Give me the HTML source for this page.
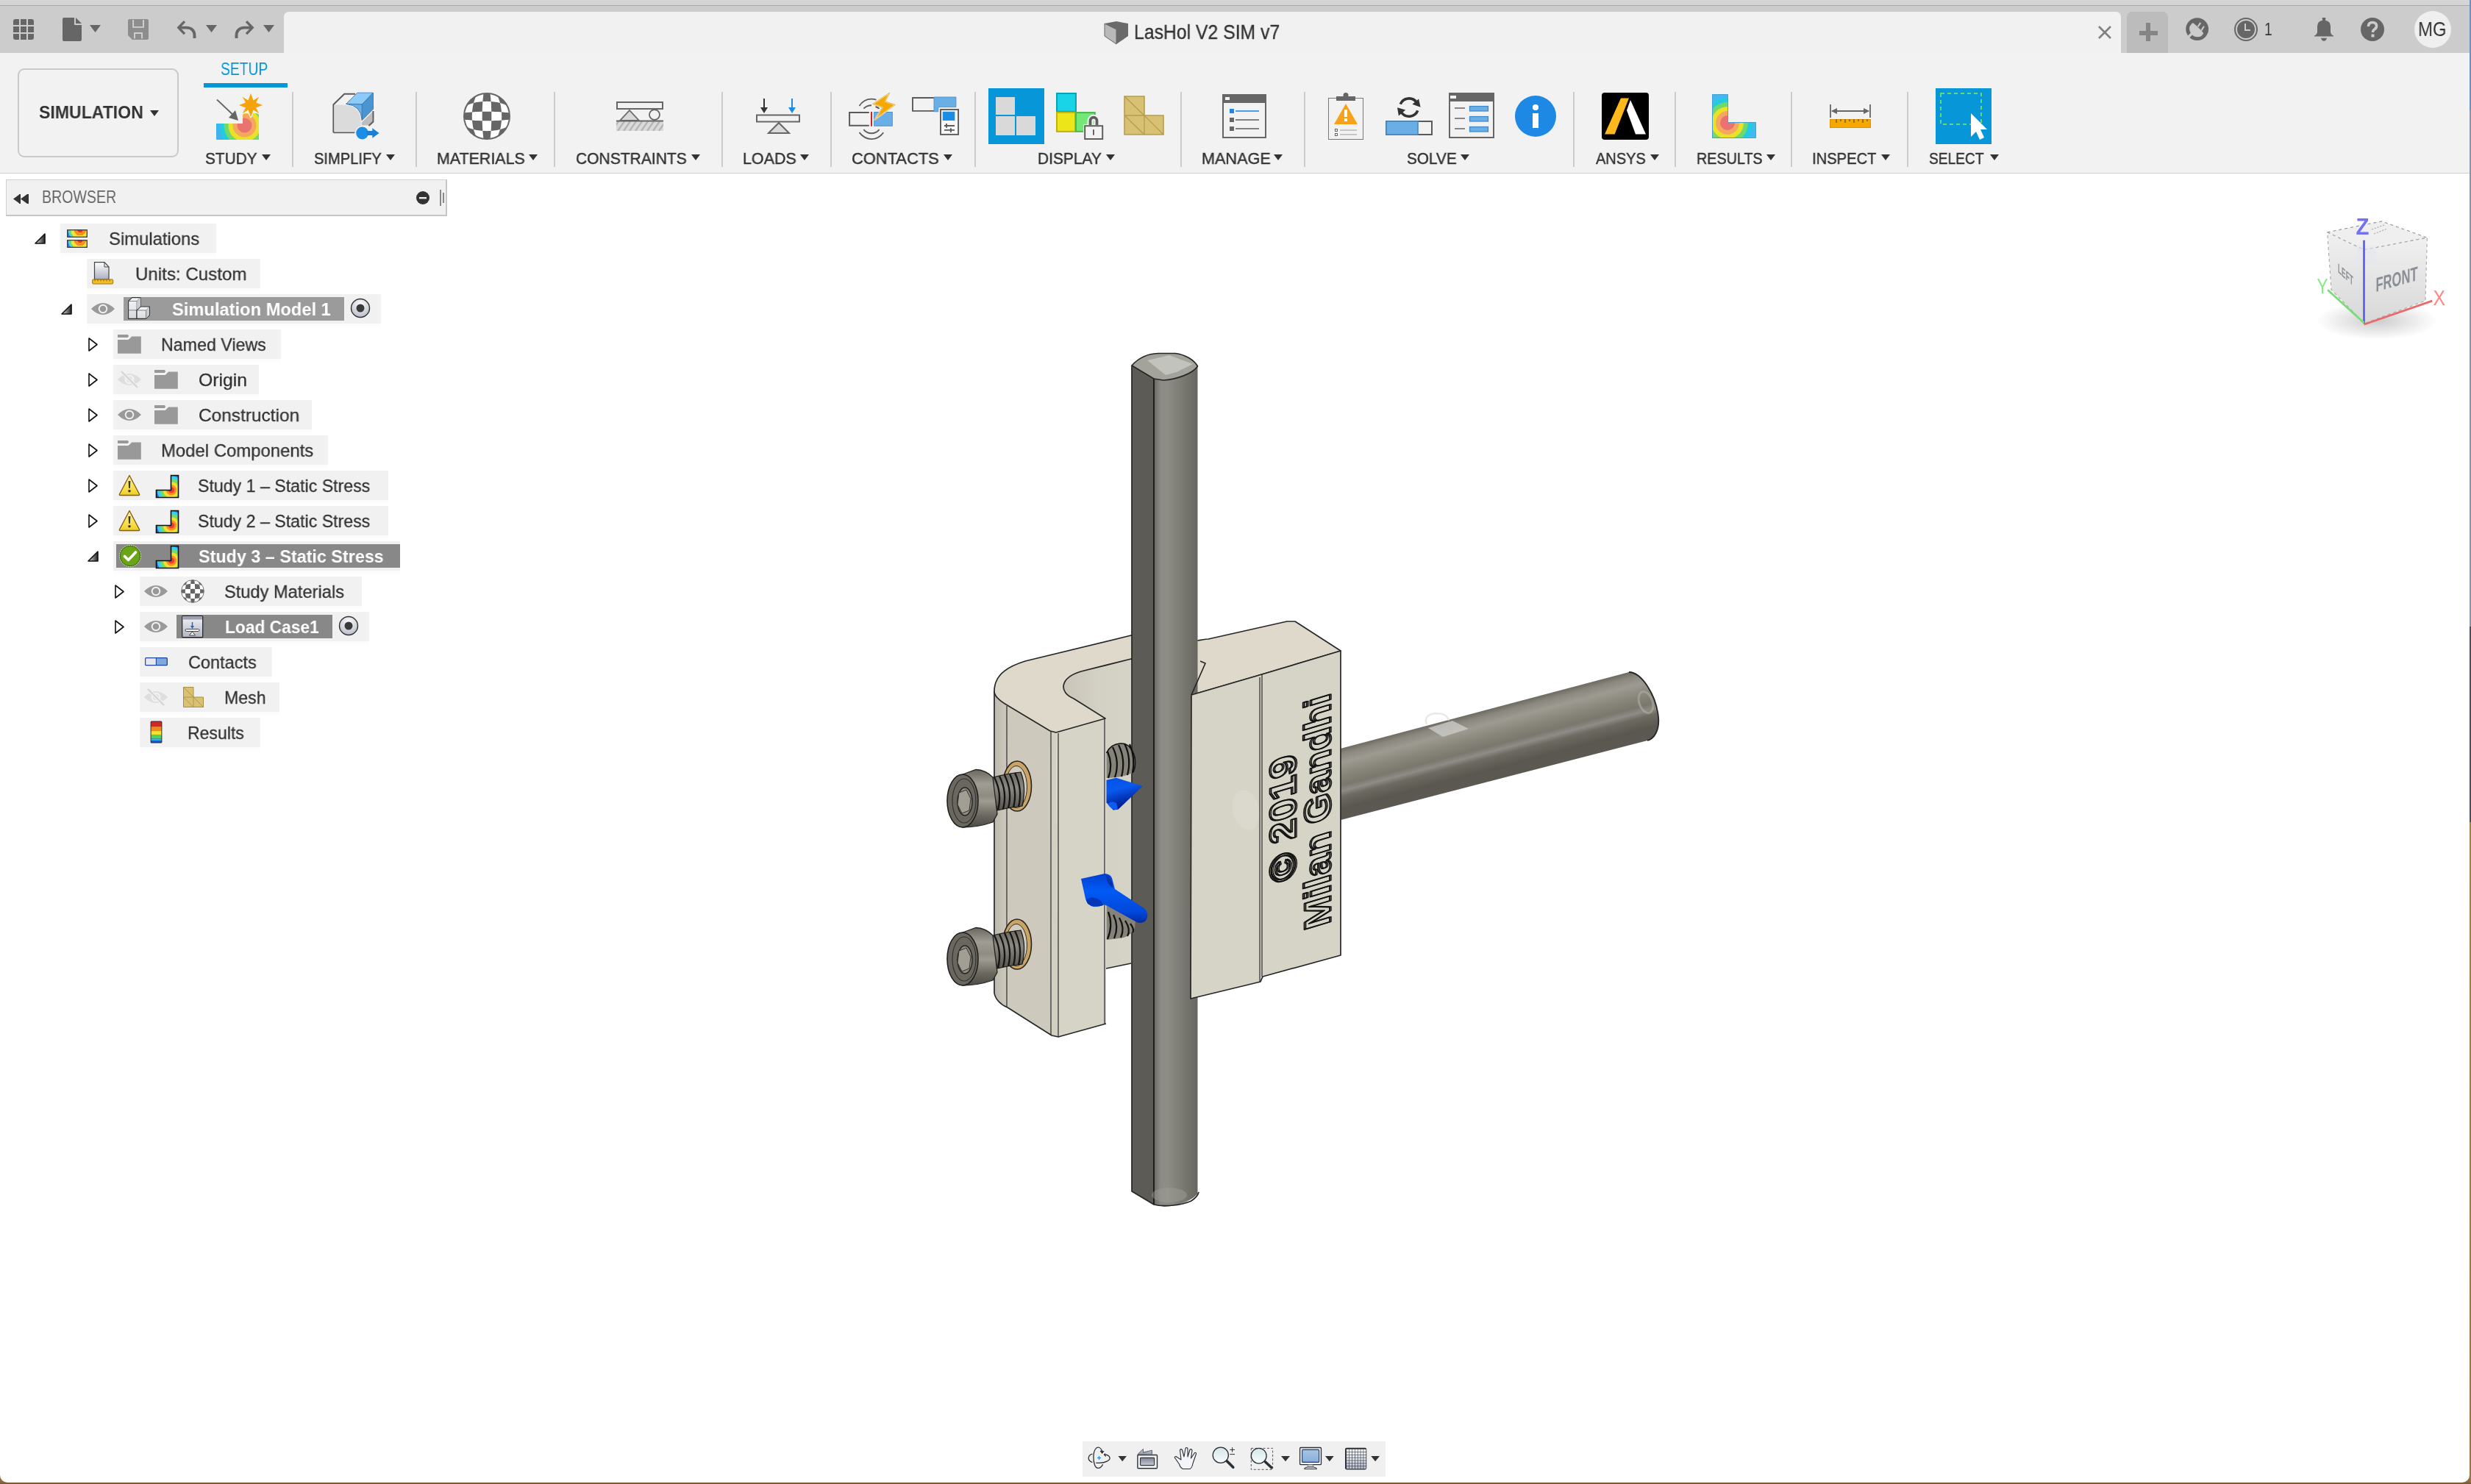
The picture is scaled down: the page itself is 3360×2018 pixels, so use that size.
<!DOCTYPE html>
<html><head><meta charset="utf-8"><style>
html,body{margin:0;padding:0;}
body{width:3360px;height:2018px;position:relative;overflow:hidden;background:#8a6a42;font-family:"Liberation Sans",sans-serif;}
.r{position:absolute;}
.i{position:absolute;overflow:visible;}
.t{position:absolute;white-space:pre;will-change:transform;-webkit-font-smoothing:antialiased;}
</style></head><body>
<div class='r' style='left:3358px;top:0px;width:2px;height:2018px;background:linear-gradient(180deg,#6f8fbf 0px,#6f8fbf 150px,#8b95a5 150px,#8b95a5 852px,#4b4f58 852px,#4b4f58 1118px,#a4804f 1118px,#9a7446 2018px);z-index:0;'></div><div class='r' style='left:0px;top:2016px;width:3360px;height:2px;background:#7b5a36;z-index:0;'></div><div class='r' style='left:0px;top:0px;width:3358px;height:7px;background:#d5d5d5;z-index:1;'></div><div class='r' style='left:0px;top:7px;width:3358px;height:1px;background:#a8a8a8;z-index:1;'></div><div class='r' style='left:0px;top:8px;width:3358px;height:64px;background:#cccccc;z-index:1;'></div><div class='r' style='left:386px;top:16px;width:2498px;height:56px;background:#f1f1f1;z-index:2;border-radius:6.5px 6.5px 0 0;'></div><div class='r' style='left:2892px;top:16px;width:56px;height:56px;background:#bcbcbc;z-index:2;border-radius:7px 7px 0 0;'></div><div class='r' style='left:2909px;top:42px;width:25px;height:6px;background:#858585;z-index:3;'></div><div class='r' style='left:2918px;top:31px;width:6px;height:25px;background:#858585;z-index:3;'></div><div class='r' style='left:0px;top:72px;width:3358px;height:163px;background:#f2f2f2;z-index:1;'></div><div class='r' style='left:0px;top:235px;width:3358px;height:1px;background:#cfcfcf;z-index:1;'></div><div class='r' style='left:0px;top:236px;width:3358px;height:1780px;background:#ffffff;z-index:1;border-radius:0 0 10px 10px;'></div><svg class='i' style='left:18px;top:26px;z-index:4;' width='28' height='28' viewBox='0 0 28 28'><defs><clipPath id='gcl'><rect width='28' height='28' rx='3'/></clipPath></defs><g clip-path='url(#gcl)'><rect x='0' y='0' width='8' height='8' fill='#666'/><rect x='0' y='10' width='8' height='8' fill='#666'/><rect x='0' y='20' width='8' height='8' fill='#666'/><rect x='10' y='0' width='8' height='8' fill='#666'/><rect x='10' y='10' width='8' height='8' fill='#666'/><rect x='10' y='20' width='8' height='8' fill='#666'/><rect x='20' y='0' width='8' height='8' fill='#666'/><rect x='20' y='10' width='8' height='8' fill='#666'/><rect x='20' y='20' width='8' height='8' fill='#666'/></g></svg><svg class='i' style='left:85px;top:24px;z-index:4;' width='26' height='32' viewBox='0 0 26 32'><path d='M2,0 H16 V9 Q16,10 17,10 H26 V30 Q26,32 24,32 H2 Q0,32 0,30 V2 Q0,0 2,0Z' fill='#666'/><path d='M18,0 L26,8 H18Z' fill='#666'/></svg><svg class='i' style='left:122px;top:34px;z-index:4;' width='15' height='10' viewBox='0 0 15 10'><path d='M0,0 H15 L7.5,10Z' fill='#666'/></svg><svg class='i' style='left:174px;top:26px;z-index:4;' width='28' height='28' viewBox='0 0 28 28'><path d='M2,0 H26 Q28,0 28,2 V26 Q28,28 26,28 H6 L0,22 V2 Q0,0 2,0Z' fill='#8d8d8d'/><path d='M7.1,1 V10.9 H21 V1' stroke='#d0d0d0' stroke-width='1.9' fill='none'/><path d='M9,26.5 V19 H19 V26.5' stroke='#d0d0d0' stroke-width='1.9' fill='none'/></svg><svg class='i' style='left:241px;top:28px;z-index:4;' width='27' height='25' viewBox='0 0 27 25'><path d='M10,1.2 L1.8,9.6 L10,18.2' stroke='#666' stroke-width='3.3' fill='none'/><path d='M2.5,9.6 H13 C19.5,9.6 23.5,14 23.5,20 V24' stroke='#666' stroke-width='3.9' fill='none'/></svg><svg class='i' style='left:280px;top:34px;z-index:4;' width='15' height='10' viewBox='0 0 15 10'><path d='M0,0 H15 L7.5,10Z' fill='#666'/></svg><svg class='i' style='left:319px;top:28px;z-index:4;' width='27' height='25' viewBox='0 0 27 25'><path d='M16,1.2 L24.2,9.6 L16,18.2' stroke='#666' stroke-width='3.3' fill='none'/><path d='M23.5,9.6 H13 C6.5,9.6 2.5,14 2.5,20 V24' stroke='#666' stroke-width='3.9' fill='none'/></svg><svg class='i' style='left:358px;top:34px;z-index:4;' width='15' height='10' viewBox='0 0 15 10'><path d='M0,0 H15 L7.5,10Z' fill='#666'/></svg><svg class='i' style='left:1502px;top:29px;z-index:4;' width='32' height='31' viewBox='0 0 32 31'><path d='M0,3 L16,0 L32,3 L32,20 L16,31 L0,20Z' fill='#6a6a6a'/><path d='M0,3 L16,11 L16,31 L0,20Z' fill='#b8b9b8' stroke='#6a6a6a' stroke-width='1'/></svg><div class='t' style='left:1542.16px;top:31.23px;font-size:26.89px;line-height:26.89px;color:#333;font-weight:400;z-index:5;transform:scaleX(0.9215);transform-origin:0 0;-webkit-text-stroke:0.35px #333;'>LasHol V2 SIM v7</div><svg class='i' style='left:2853px;top:35px;z-index:4;' width='18' height='18' viewBox='0 0 18 18'><path d='M1,1 L17,17 M17,1 L1,17' stroke='#808080' stroke-width='2.6'/></svg><svg class='i' style='left:2972px;top:24px;z-index:4;' width='32' height='32' viewBox='0 0 32 32'><circle cx='15.7' cy='15.6' r='15.4' fill='#666'/><path d='M9.8,7 L13.9,10.3 L21.4,17.4 L24.3,21.3 Q22,26.5 16.3,26.3 Q10,26 7.5,22 Q4,16 5.5,12 Q7,9 9.8,7Z' fill='#cccccc'/><path d='M1,29 L9,21' stroke='#cccccc' stroke-width='3.4'/><path d='M16.6,12.4 L20.2,6.9 M21.4,17.4 L24.9,11.8' stroke='#cccccc' stroke-width='2'/></svg><svg class='i' style='left:3038px;top:24px;z-index:4;' width='32' height='32' viewBox='0 0 32 32'><circle cx='16' cy='16' r='15' fill='none' stroke='#666' stroke-width='2'/><circle cx='16' cy='16' r='12' fill='#666'/><path d='M15,8 V17 H22' stroke='#cccccc' stroke-width='2' fill='none'/></svg><div class='t' style='left:3079.18px;top:29.31px;font-size:23.26px;line-height:23.26px;color:#333;font-weight:400;z-index:5;transform:scaleX(0.8182);transform-origin:0 0;'>1</div><svg class='i' style='left:3147px;top:24px;z-index:4;' width='26' height='32' viewBox='0 0 26 32'><rect x='10.8' y='0' width='4.4' height='5' fill='#666'/><path d='M4,11.8 Q4,3.8 13,3.8 Q22,3.8 22,11.8 V19.8 Q22,21.5 24,23.4 L26,24.6 V25.6 H0 V24.6 L2,23.4 Q4,21.5 4,19.8Z' fill='#666'/><path d='M9,27.8 H17 Q16,31.8 13,31.8 Q10,31.8 9,27.8Z' fill='#666'/></svg><svg class='i' style='left:3210px;top:24px;z-index:4;' width='32' height='32' viewBox='0 0 32 32'><circle cx='16' cy='16' r='16' fill='#666'/><path d='M10.5,12 Q10.5,6.5 16,6.5 Q21.5,6.5 21.5,11.5 Q21.5,14.5 18,16.5 Q16.5,17.5 16.5,20' stroke='#cccccc' stroke-width='3.6' fill='none'/><rect x='14.5' y='22.5' width='4' height='4' fill='#cccccc'/></svg><svg class='i' style='left:3283px;top:15px;z-index:4;' width='50' height='50' viewBox='0 0 50 50'><circle cx='25' cy='25' r='25' fill='#efefef'/></svg><div class='t' style='left:3288.23px;top:27.11px;font-size:27.03px;line-height:27.03px;color:#333;font-weight:400;z-index:5;transform:scaleX(0.8860);transform-origin:0 0;'>MG</div><div class='t' style='left:300.17px;top:83.31px;font-size:23.26px;line-height:23.26px;color:#0696d7;font-weight:400;z-index:5;transform:scaleX(0.8289);transform-origin:0 0;'>SETUP</div><div class='r' style='left:277px;top:113px;width:114px;height:6px;background:#0696d7;z-index:3;'></div><div class='r' style='left:24px;top:93px;width:219px;height:121px;background:transparent;z-index:3;border:2px solid #c9c9c9;border-radius:9px;box-sizing:border-box;'></div><div class='t' style='left:53.00px;top:142.31px;font-size:23.26px;line-height:23.26px;color:#333;font-weight:700;z-index:5;transform:scaleX(0.9920);transform-origin:0 0;'>SIMULATION</div><svg class='i' style='left:204px;top:150px;z-index:4;' width='12' height='8' viewBox='0 0 12 8'><path d='M0,0 H12 L6.0,8Z' fill='#333'/></svg><div class='r' style='left:397px;top:125px;width:2px;height:102px;background:#cbcbcb;z-index:3;'></div><div class='r' style='left:565px;top:125px;width:2px;height:102px;background:#cbcbcb;z-index:3;'></div><div class='r' style='left:753px;top:125px;width:2px;height:102px;background:#cbcbcb;z-index:3;'></div><div class='r' style='left:981px;top:125px;width:2px;height:102px;background:#cbcbcb;z-index:3;'></div><div class='r' style='left:1129px;top:125px;width:2px;height:102px;background:#cbcbcb;z-index:3;'></div><div class='r' style='left:1325px;top:125px;width:2px;height:102px;background:#cbcbcb;z-index:3;'></div><div class='r' style='left:1605px;top:125px;width:2px;height:102px;background:#cbcbcb;z-index:3;'></div><div class='r' style='left:1773px;top:125px;width:2px;height:102px;background:#cbcbcb;z-index:3;'></div><div class='r' style='left:2139px;top:125px;width:2px;height:102px;background:#cbcbcb;z-index:3;'></div><div class='r' style='left:2277px;top:125px;width:2px;height:102px;background:#cbcbcb;z-index:3;'></div><div class='r' style='left:2435px;top:125px;width:2px;height:102px;background:#cbcbcb;z-index:3;'></div><div class='r' style='left:2593px;top:125px;width:2px;height:102px;background:#cbcbcb;z-index:3;'></div><div class='t' style='left:279.06px;top:205.17px;font-size:22.24px;line-height:22.24px;color:#333;font-weight:400;z-index:5;transform:scaleX(0.9366);transform-origin:0 0;-webkit-text-stroke:0.45px #333;'>STUDY</div><svg class='i' style='left:356px;top:210px;z-index:4;' width='12' height='8' viewBox='0 0 12 8'><path d='M0,0 H12 L6.0,8Z' fill='#333'/></svg><div class='t' style='left:427.09px;top:205.17px;font-size:22.24px;line-height:22.24px;color:#333;font-weight:400;z-index:5;transform:scaleX(0.9056);transform-origin:0 0;-webkit-text-stroke:0.45px #333;'>SIMPLIFY</div><svg class='i' style='left:525px;top:210px;z-index:4;' width='12' height='8' viewBox='0 0 12 8'><path d='M0,0 H12 L6.0,8Z' fill='#333'/></svg><div class='t' style='left:594.04px;top:205.17px;font-size:22.24px;line-height:22.24px;color:#333;font-weight:400;z-index:5;transform:scaleX(0.9629);transform-origin:0 0;-webkit-text-stroke:0.45px #333;'>MATERIALS</div><svg class='i' style='left:719px;top:210px;z-index:4;' width='12' height='8' viewBox='0 0 12 8'><path d='M0,0 H12 L6.0,8Z' fill='#333'/></svg><div class='t' style='left:783.05px;top:205.17px;font-size:22.24px;line-height:22.24px;color:#333;font-weight:400;z-index:5;transform:scaleX(0.9459);transform-origin:0 0;-webkit-text-stroke:0.45px #333;'>CONSTRAINTS</div><svg class='i' style='left:940px;top:210px;z-index:4;' width='12' height='8' viewBox='0 0 12 8'><path d='M0,0 H12 L6.0,8Z' fill='#333'/></svg><div class='t' style='left:1010.03px;top:205.17px;font-size:22.24px;line-height:22.24px;color:#333;font-weight:400;z-index:5;transform:scaleX(0.9654);transform-origin:0 0;-webkit-text-stroke:0.45px #333;'>LOADS</div><svg class='i' style='left:1088px;top:210px;z-index:4;' width='12' height='8' viewBox='0 0 12 8'><path d='M0,0 H12 L6.0,8Z' fill='#333'/></svg><div class='t' style='left:1158.02px;top:205.17px;font-size:22.24px;line-height:22.24px;color:#333;font-weight:400;z-index:5;transform:scaleX(0.9848);transform-origin:0 0;-webkit-text-stroke:0.45px #333;'>CONTACTS</div><svg class='i' style='left:1283px;top:210px;z-index:4;' width='12' height='8' viewBox='0 0 12 8'><path d='M0,0 H12 L6.0,8Z' fill='#333'/></svg><div class='t' style='left:1411.06px;top:205.17px;font-size:22.24px;line-height:22.24px;color:#333;font-weight:400;z-index:5;transform:scaleX(0.9405);transform-origin:0 0;-webkit-text-stroke:0.45px #333;'>DISPLAY</div><svg class='i' style='left:1504px;top:210px;z-index:4;' width='12' height='8' viewBox='0 0 12 8'><path d='M0,0 H12 L6.0,8Z' fill='#333'/></svg><div class='t' style='left:1634.03px;top:205.17px;font-size:22.24px;line-height:22.24px;color:#333;font-weight:400;z-index:5;transform:scaleX(0.9732);transform-origin:0 0;-webkit-text-stroke:0.45px #333;'>MANAGE</div><svg class='i' style='left:1732px;top:210px;z-index:4;' width='12' height='8' viewBox='0 0 12 8'><path d='M0,0 H12 L6.0,8Z' fill='#333'/></svg><div class='t' style='left:1913.07px;top:205.17px;font-size:22.24px;line-height:22.24px;color:#333;font-weight:400;z-index:5;transform:scaleX(0.9339);transform-origin:0 0;-webkit-text-stroke:0.45px #333;'>SOLVE</div><svg class='i' style='left:1986px;top:210px;z-index:4;' width='12' height='8' viewBox='0 0 12 8'><path d='M0,0 H12 L6.0,8Z' fill='#333'/></svg><div class='t' style='left:2170.00px;top:205.17px;font-size:22.24px;line-height:22.24px;color:#333;font-weight:400;z-index:5;transform:scaleX(0.8988);transform-origin:0 0;-webkit-text-stroke:0.45px #333;'>ANSYS</div><svg class='i' style='left:2244px;top:210px;z-index:4;' width='12' height='8' viewBox='0 0 12 8'><path d='M0,0 H12 L6.0,8Z' fill='#333'/></svg><div class='t' style='left:2307.11px;top:205.17px;font-size:22.24px;line-height:22.24px;color:#333;font-weight:400;z-index:5;transform:scaleX(0.8883);transform-origin:0 0;-webkit-text-stroke:0.45px #333;'>RESULTS</div><svg class='i' style='left:2402px;top:210px;z-index:4;' width='12' height='8' viewBox='0 0 12 8'><path d='M0,0 H12 L6.0,8Z' fill='#333'/></svg><div class='t' style='left:2464.19px;top:205.17px;font-size:22.24px;line-height:22.24px;color:#333;font-weight:400;z-index:5;transform:scaleX(0.9073);transform-origin:0 0;-webkit-text-stroke:0.45px #333;'>INSPECT</div><svg class='i' style='left:2558px;top:210px;z-index:4;' width='12' height='8' viewBox='0 0 12 8'><path d='M0,0 H12 L6.0,8Z' fill='#333'/></svg><div class='t' style='left:2623.14px;top:205.17px;font-size:22.24px;line-height:22.24px;color:#333;font-weight:400;z-index:5;transform:scaleX(0.8613);transform-origin:0 0;-webkit-text-stroke:0.45px #333;'>SELECT</div><svg class='i' style='left:2706px;top:210px;z-index:4;' width='12' height='8' viewBox='0 0 12 8'><path d='M0,0 H12 L6.0,8Z' fill='#333'/></svg><svg class='i' style='left:294px;top:127px;z-index:4;' width='64' height='64' viewBox='0 0 64 64'><defs><clipPath id='stL'><path d='M0,41 H36 V27 H58 V63 H0Z'/></clipPath></defs>
<g clip-path='url(#stL)'><rect x='0' y='20' width='60' height='45' fill='#3fb3f0'/><circle cx='38.5' cy='43.5' r='34' fill='#22cce0'/><circle cx='38.5' cy='43.5' r='28' fill='#70d96d'/><circle cx='38.5' cy='43.5' r='22' fill='#e9e227'/><circle cx='38.5' cy='43.5' r='16' fill='#f6a660'/><circle cx='38.5' cy='43.5' r='10' fill='#e8736f'/></g>
<path d='M1,8.5 L27,33' stroke='#666' stroke-width='1.8'/><path d='M30,37 L17,33 L26,23Z' fill='#666'/>
<path d='M47,0 L50.5,9.5 L58.3,4.7 L54,12.5 L63,16 L54,19.5 L58.3,27.3 L50.5,22.5 L47,32 L43.5,22.5 L35.7,27.3 L40,19.5 L31,16 L40,12.5 L35.7,4.7 L43.5,9.5Z' fill='#f2f2f2' stroke='#f2f2f2' stroke-width='2.6' stroke-linejoin='round'/><path d='M47,0 L50.5,9.5 L58.3,4.7 L54,12.5 L63,16 L54,19.5 L58.3,27.3 L50.5,22.5 L47,32 L43.5,22.5 L35.7,27.3 L40,19.5 L31,16 L40,12.5 L35.7,4.7 L43.5,9.5Z' fill='#f5a30a'/></svg><svg class='i' style='left:452px;top:126px;z-index:4;' width='64' height='64' viewBox='0 0 64 64'><path d='M1.4,54.2 V16.2 L16.2,1.7 H31' fill='none' stroke='#5a5a5a' stroke-width='2'/>
<path d='M1.4,54.2 H30.5' stroke='#5a5a5a' stroke-width='2'/>
<path d='M2.4,16.4 H13.3 Q38.7,17 38.7,40 V53.4 H2.4Z' fill='#dbdbdb'/>
<path d='M39.8,40.5 L54.3,26 V39.4 L49.3,44.4 H39.8Z' fill='#bdbdbd'/>
<path d='M55.4,25 V39.6 L49.5,45' fill='none' stroke='#5a5a5a' stroke-width='2'/>
<path d='M18.7,15.3 L33.8,0.2 H55.4 L40.3,15.9Z' fill='#8ccaf8' stroke='#4a8ac8' stroke-width='1'/>
<path d='M40.3,15.9 L55.4,0.2 V22.3 L40.3,37.4Z' fill='#4a95d0' stroke='#3a7ab8' stroke-width='1'/>
<path d='M18.7,15.3 L40.3,15.9 V37.4 Q39,17.5 18.7,15.3Z' fill='#68aee5' stroke='#3a7ab8' stroke-width='1'/>
<circle cx='40.6' cy='55' r='9.2' fill='#1a8ee6' stroke='#f2f2f2' stroke-width='1.6'/>
<path d='M47,52 H54.3 V48.2 L63.5,55 L54.3,61.7 V58 H47Z' fill='#1a7fd5'/></svg><svg class='i' style='left:630px;top:126px;z-index:4;' width='64' height='64' viewBox='0 0 64 64'><defs><clipPath id='sph'><circle cx='32' cy='32' r='31'/></clipPath></defs><circle cx='32' cy='32' r='31' fill='#fff'/><g clip-path='url(#sph)'><path d='M9.7,9.7 L11.1,8.5 L12.4,7.3 L13.7,6.3 L15.1,5.4 L16.4,4.6 L17.7,3.9 L17.7,3.9 L16.9,5.6 L16.2,7.3 L15.6,9.0 L15.0,10.7 L14.5,12.3 L14.0,14.0 L14.0,14.0 L12.3,14.5 L10.7,15.0 L9.0,15.6 L7.3,16.2 L5.6,16.9 L3.9,17.7 L3.9,17.7 L4.6,16.4 L5.4,15.1 L6.3,13.7 L7.3,12.4 L8.5,11.1 L9.7,9.7Z' fill='#666'/><path d='M0.8,27.5 L2.7,27.3 L4.6,27.1 L6.4,26.9 L8.3,26.7 L10.2,26.5 L12.0,26.4 L12.0,26.4 L11.9,28.3 L11.9,30.1 L11.8,32.0 L11.9,33.9 L11.9,35.7 L12.0,37.6 L12.0,37.6 L10.2,37.5 L8.3,37.3 L6.4,37.1 L4.6,36.9 L2.7,36.7 L0.8,36.5 L0.8,36.5 L0.6,35.0 L0.5,33.5 L0.5,32.0 L0.5,30.5 L0.6,29.0 L0.8,27.5Z' fill='#666'/><path d='M3.9,46.3 L5.6,47.1 L7.3,47.8 L9.0,48.4 L10.7,49.0 L12.3,49.5 L14.0,50.0 L14.0,50.0 L14.5,51.7 L15.0,53.3 L15.6,55.0 L16.2,56.7 L16.9,58.4 L17.7,60.1 L17.7,60.1 L16.4,59.4 L15.1,58.6 L13.7,57.7 L12.4,56.7 L11.1,55.5 L9.7,54.3 L9.7,54.3 L8.5,52.9 L7.3,51.6 L6.3,50.3 L5.4,48.9 L4.6,47.6 L3.9,46.3Z' fill='#666'/><path d='M14.0,14.0 L16.1,13.5 L18.1,13.1 L20.2,12.7 L22.3,12.5 L24.3,12.2 L26.4,12.0 L26.4,12.0 L26.2,14.3 L26.1,16.6 L26.0,18.9 L25.9,21.2 L25.8,23.5 L25.8,25.8 L25.8,25.8 L23.5,25.8 L21.2,25.9 L18.9,26.0 L16.6,26.1 L14.3,26.2 L12.0,26.4 L12.0,26.4 L12.2,24.3 L12.5,22.3 L12.7,20.2 L13.1,18.1 L13.5,16.1 L14.0,14.0Z' fill='#666'/><path d='M12.0,37.6 L14.3,37.8 L16.6,37.9 L18.9,38.0 L21.2,38.1 L23.5,38.2 L25.8,38.2 L25.8,38.2 L25.8,40.5 L25.9,42.8 L26.0,45.1 L26.1,47.4 L26.2,49.7 L26.4,52.0 L26.4,52.0 L24.3,51.8 L22.3,51.5 L20.2,51.3 L18.1,50.9 L16.1,50.5 L14.0,50.0 L14.0,50.0 L13.5,47.9 L13.1,45.9 L12.7,43.8 L12.5,41.7 L12.2,39.7 L12.0,37.6Z' fill='#666'/><path d='M27.5,0.8 L29.0,0.6 L30.5,0.5 L32.0,0.5 L33.5,0.5 L35.0,0.6 L36.5,0.8 L36.5,0.8 L36.7,2.7 L36.9,4.6 L37.1,6.4 L37.3,8.3 L37.5,10.2 L37.6,12.0 L37.6,12.0 L35.7,11.9 L33.9,11.9 L32.0,11.8 L30.1,11.9 L28.3,11.9 L26.4,12.0 L26.4,12.0 L26.5,10.2 L26.7,8.3 L26.9,6.4 L27.1,4.6 L27.3,2.7 L27.5,0.8Z' fill='#666'/><path d='M25.8,25.8 L27.8,25.7 L29.9,25.7 L32.0,25.7 L34.1,25.7 L36.2,25.7 L38.2,25.8 L38.2,25.8 L38.3,27.8 L38.3,29.9 L38.3,32.0 L38.3,34.1 L38.3,36.2 L38.2,38.2 L38.2,38.2 L36.2,38.3 L34.1,38.3 L32.0,38.3 L29.9,38.3 L27.8,38.3 L25.8,38.2 L25.8,38.2 L25.7,36.2 L25.7,34.1 L25.7,32.0 L25.7,29.9 L25.7,27.8 L25.8,25.8Z' fill='#666'/><path d='M26.4,52.0 L28.3,52.1 L30.1,52.1 L32.0,52.2 L33.9,52.1 L35.7,52.1 L37.6,52.0 L37.6,52.0 L37.5,53.8 L37.3,55.7 L37.1,57.6 L36.9,59.4 L36.7,61.3 L36.5,63.2 L36.5,63.2 L35.0,63.4 L33.5,63.5 L32.0,63.5 L30.5,63.5 L29.0,63.4 L27.5,63.2 L27.5,63.2 L27.3,61.3 L27.1,59.4 L26.9,57.6 L26.7,55.7 L26.5,53.8 L26.4,52.0Z' fill='#666'/><path d='M37.6,12.0 L39.7,12.2 L41.7,12.5 L43.8,12.7 L45.9,13.1 L47.9,13.5 L50.0,14.0 L50.0,14.0 L50.5,16.1 L50.9,18.1 L51.3,20.2 L51.5,22.3 L51.8,24.3 L52.0,26.4 L52.0,26.4 L49.7,26.2 L47.4,26.1 L45.1,26.0 L42.8,25.9 L40.5,25.8 L38.2,25.8 L38.2,25.8 L38.2,23.5 L38.1,21.2 L38.0,18.9 L37.9,16.6 L37.8,14.3 L37.6,12.0Z' fill='#666'/><path d='M38.2,38.2 L40.5,38.2 L42.8,38.1 L45.1,38.0 L47.4,37.9 L49.7,37.8 L52.0,37.6 L52.0,37.6 L51.8,39.7 L51.5,41.7 L51.3,43.8 L50.9,45.9 L50.5,47.9 L50.0,50.0 L50.0,50.0 L47.9,50.5 L45.9,50.9 L43.8,51.3 L41.7,51.5 L39.7,51.8 L37.6,52.0 L37.6,52.0 L37.8,49.7 L37.9,47.4 L38.0,45.1 L38.1,42.8 L38.2,40.5 L38.2,38.2Z' fill='#666'/><path d='M46.3,3.9 L47.6,4.6 L48.9,5.4 L50.3,6.3 L51.6,7.3 L52.9,8.5 L54.3,9.7 L54.3,9.7 L55.5,11.1 L56.7,12.4 L57.7,13.7 L58.6,15.1 L59.4,16.4 L60.1,17.7 L60.1,17.7 L58.4,16.9 L56.7,16.2 L55.0,15.6 L53.3,15.0 L51.7,14.5 L50.0,14.0 L50.0,14.0 L49.5,12.3 L49.0,10.7 L48.4,9.0 L47.8,7.3 L47.1,5.6 L46.3,3.9Z' fill='#666'/><path d='M52.0,26.4 L53.8,26.5 L55.7,26.7 L57.6,26.9 L59.4,27.1 L61.3,27.3 L63.2,27.5 L63.2,27.5 L63.4,29.0 L63.5,30.5 L63.5,32.0 L63.5,33.5 L63.4,35.0 L63.2,36.5 L63.2,36.5 L61.3,36.7 L59.4,36.9 L57.6,37.1 L55.7,37.3 L53.8,37.5 L52.0,37.6 L52.0,37.6 L52.1,35.7 L52.1,33.9 L52.2,32.0 L52.1,30.1 L52.1,28.3 L52.0,26.4Z' fill='#666'/><path d='M50.0,50.0 L51.7,49.5 L53.3,49.0 L55.0,48.4 L56.7,47.8 L58.4,47.1 L60.1,46.3 L60.1,46.3 L59.4,47.6 L58.6,48.9 L57.7,50.3 L56.7,51.6 L55.5,52.9 L54.3,54.3 L54.3,54.3 L52.9,55.5 L51.6,56.7 L50.3,57.7 L48.9,58.6 L47.6,59.4 L46.3,60.1 L46.3,60.1 L47.1,58.4 L47.8,56.7 L48.4,55.0 L49.0,53.3 L49.5,51.7 L50.0,50.0Z' fill='#666'/></g><circle cx='32' cy='32' r='31' fill='none' stroke='#666' stroke-width='2'/></svg><svg class='i' style='left:838px;top:138px;z-index:4;' width='64' height='40' viewBox='0 0 64 40'><defs><clipPath id='gnd'><rect x='0' y='27' width='64' height='13'/></clipPath></defs>
<rect x='1' y='1' width='62' height='9' fill='#f2f2f2' stroke='#666' stroke-width='2'/>
<path d='M5,26 L18,12 L31,26Z' fill='#d9d9d9' stroke='#666' stroke-width='1.8'/><circle cx='52' cy='18' r='7' fill='#f2f2f2' stroke='#666' stroke-width='1.8'/>
<rect x='0' y='27' width='64' height='13' fill='#dadada'/><g clip-path='url(#gnd)'><path d='M-6,40 L3,27' stroke='#b4b4b4' stroke-width='2.2'/><path d='M2,40 L11,27' stroke='#b4b4b4' stroke-width='2.2'/><path d='M10,40 L19,27' stroke='#b4b4b4' stroke-width='2.2'/><path d='M18,40 L27,27' stroke='#b4b4b4' stroke-width='2.2'/><path d='M26,40 L35,27' stroke='#b4b4b4' stroke-width='2.2'/><path d='M34,40 L43,27' stroke='#b4b4b4' stroke-width='2.2'/><path d='M42,40 L51,27' stroke='#b4b4b4' stroke-width='2.2'/><path d='M50,40 L59,27' stroke='#b4b4b4' stroke-width='2.2'/><path d='M58,40 L67,27' stroke='#b4b4b4' stroke-width='2.2'/><path d='M66,40 L75,27' stroke='#b4b4b4' stroke-width='2.2'/></g><rect x='0' y='25.5' width='64' height='2' fill='#666'/></svg><svg class='i' style='left:1028px;top:134px;z-index:4;' width='60' height='48' viewBox='0 0 60 48'><path d='M11,0 V14' stroke='#333' stroke-width='2'/><path d='M6,12 H16 L11,20Z' fill='#333'/>
<path d='M49,0 V14' stroke='#1e8ce6' stroke-width='2'/><path d='M44,12 H54 L49,20Z' fill='#1e8ce6'/>
<rect x='1' y='22.5' width='58' height='9' fill='#f2f2f2' stroke='#666' stroke-width='2'/>
<path d='M17,47 L31,33 L45,47Z' fill='#d9d9d9' stroke='#666' stroke-width='2'/></svg><svg class='i' style='left:1154px;top:126px;z-index:4;' width='66' height='66' viewBox='0 0 66 66'><path d='M14.5,18 C19,11 25,8.6 31,8.6 C33.5,8.6 35.5,9 37.5,9.6 M20.4,21.7 C23,19 27,17.3 31,17.3 M36.5,19 C38,19.6 40,20.5 41.6,21.7 M20.4,50.1 C23,53.5 27,55.2 31,55.2 C35,55.2 39,53.5 41.6,50.1 M14.5,54.2 C19,60 25,63.1 31,63.1 C37,63.1 43,60 47.3,54.2' stroke='#5e5e5e' stroke-width='1.9' fill='none'/>
<path d='M27.8,27 H1.1 V44.7 H27.8' fill='#f2f2f2' stroke='#5a5a5a' stroke-width='2'/>
<rect x='30.1' y='26' width='1.9' height='19.7' fill='#d01818'/>
<rect x='34.7' y='26.5' width='24.6' height='18.7' fill='#6aaee6' stroke='#4a92cc' stroke-width='1'/>
<path d='M55.7,0.15 L49.8,11.9 L63.4,16.5 L35.2,37 L45.7,20.1 L32.4,15.5Z' fill='#f5a800' stroke='#f2f2f2' stroke-width='1.6' stroke-linejoin='round'/>
<path d='M55.7,0.15 L49.8,11.9 L63.4,16.5 L35.2,37 L45.7,20.1 L32.4,15.5Z' fill='none' stroke='#e39a00' stroke-width='0.7'/></svg><svg class='i' style='left:1240px;top:132px;z-index:4;' width='66' height='54' viewBox='0 0 66 54'><path d='M30,1 H1 V18.9 H30' fill='#f2f2f2' stroke='#5a5a5a' stroke-width='1.9'/>
<path d='M30,0 H59.9 V13.6 H35.9 V19.8 H30Z' fill='#6aaee6' stroke='#4a92cc' stroke-width='0.9'/>
<rect x='36.6' y='14.6' width='29' height='38.8' fill='#f2f2f2'/>
<rect x='39' y='17' width='24.1' height='33.9' fill='#f7f7f7' stroke='#5a5a5a' stroke-width='1.9'/>
<rect x='42.1' y='20.1' width='15.9' height='11.6' fill='#1a8ee6' stroke='#1580d0' stroke-width='0.6'/>
<path d='M44,39 H58 M44,44.9 H58 M47,36 V41.7 M52.9,42.2 V47.9' stroke='#5a5a5a' stroke-width='1.9'/></svg><svg class='i' style='left:1344px;top:120px;z-index:4;' width='76' height='76' viewBox='0 0 76 76'><rect x='0' y='0' width='76' height='76' fill='#0796d8'/><rect x='10' y='12' width='26' height='24' fill='#d9d9d9'/><rect x='10' y='38' width='26' height='26' fill='#d9d9d9'/><rect x='38' y='38' width='26' height='26' fill='#d9d9d9'/></svg><svg class='i' style='left:1436px;top:126px;z-index:4;' width='66' height='66' viewBox='0 0 66 66'><rect x='1' y='1' width='26' height='24.8' fill='#18d4e6' stroke='#0ea0b4' stroke-width='2'/>
<rect x='1' y='26.8' width='25.1' height='26.1' fill='#ebe51a' stroke='#c0b010' stroke-width='2'/>
<rect x='27' y='27.1' width='25.8' height='25.8' fill='#74e876' stroke='#4cb84c' stroke-width='2'/>
<path d='M46.5,44 V38.2 A4.5,4.5 0 0 1 55.5,38.2 V44' stroke='#f2f2f2' stroke-width='8' fill='none'/>
<rect x='37' y='43' width='28.3' height='22' fill='#f2f2f2'/>
<path d='M46.5,44 V38.2 A4.5,4.5 0 0 1 55.5,38.2 V44' stroke='#5e5e5e' stroke-width='3.8' fill='none'/>
<rect x='39.2' y='45.2' width='24' height='17.8' fill='#f4f4f4' stroke='#5e5e5e' stroke-width='2'/>
<rect x='50' y='50.1' width='1.9' height='7.6' fill='#5e5e5e'/></svg><svg class='i' style='left:1528px;top:130px;z-index:4;' width='56' height='56' viewBox='0 0 56 56'><path d='M1,1 H28 V27 H54 V53 H1Z' fill='#d9c173' stroke='#b39d55' stroke-width='1.6'/>
<path d='M1,27 H28 V53 M1,1 L28,27 M1,27 L28,53 M28,27 L54,53' stroke='#b39d55' stroke-width='1.3' fill='none'/></svg><svg class='i' style='left:1662px;top:128px;z-index:4;' width='60' height='60' viewBox='0 0 60 60'><rect x='1' y='1' width='58' height='58' fill='#f2f2f2' stroke='#666' stroke-width='2'/><rect x='0' y='0' width='60' height='12' fill='#666'/>
<rect x='4' y='4' width='6' height='4' fill='#f2f2f2'/>
<rect x='10' y='20' width='6' height='6' fill='#1e88e5'/><rect x='18' y='22.2' width='32' height='1.6' fill='#1e88e5'/>
<rect x='10' y='32' width='6' height='6' fill='#666'/><rect x='18' y='34.2' width='32' height='1.6' fill='#666'/>
<rect x='10' y='44' width='6' height='6' fill='#666'/><rect x='18' y='46.2' width='32' height='1.6' fill='#666'/></svg><svg class='i' style='left:1806px;top:126px;z-index:4;' width='48' height='64' viewBox='0 0 48 64'><rect x='0.5' y='7.5' width='47' height='56' fill='#f2f2f2' stroke='#777' stroke-width='1'/>
<rect x='11' y='5' width='26' height='6' fill='#666'/><circle cx='24' cy='3.5' r='3.5' fill='#666'/>
<path d='M8,43 L24,15 L40,43Z' fill='#f7a21b'/><rect x='22' y='23' width='4' height='10' fill='#fff'/><rect x='22' y='35' width='4' height='4' fill='#fff'/>
<rect x='9.5' y='49.5' width='3' height='3' fill='none' stroke='#666' stroke-width='1'/><rect x='9.5' y='55.5' width='3' height='3' fill='none' stroke='#666' stroke-width='1'/>
<path d='M16,51 H39 M16,57 H39' stroke='#9a9a9a' stroke-width='1.2'/></svg><svg class='i' style='left:1884px;top:131px;z-index:4;' width='64' height='54' viewBox='0 0 64 54'><path d='M20.2,10.6 A12.8,12.8 0 0 1 42.5,8.5' stroke='#333' stroke-width='3.6' fill='none'/><path d='M36.4,10.8 L45.1,3.6 L47.6,14.7Z' fill='#333'/>
<path d='M43.8,19.4 A12.8,12.8 0 0 1 21.5,21.8' stroke='#333' stroke-width='3.6' fill='none'/><path d='M16,15.2 L27.2,18.6 L17.9,26.4Z' fill='#333'/>
<rect x='1' y='34' width='62' height='18' fill='#f2f2f2' stroke='#5a5a5a' stroke-width='2'/><rect x='1' y='34' width='43' height='18' fill='#6aaee6' stroke='#4a88c0' stroke-width='1.6'/></svg><svg class='i' style='left:1970px;top:126px;z-index:4;' width='62' height='62' viewBox='0 0 62 62'><rect x='1' y='1' width='60' height='60' fill='#f2f2f2' stroke='#666' stroke-width='2'/><rect x='0' y='0' width='62' height='12' fill='#666'/>
<rect x='2' y='4' width='8' height='4' fill='#f2f2f2'/>
<path d='M8,21 H22 M8,35 H22 M8,49 H22' stroke='#666' stroke-width='1.6'/>
<rect x='28.5' y='18.5' width='25' height='6.5' fill='#6aaee6' stroke='#3b88c8' stroke-width='1.2'/>
<rect x='28.5' y='32.5' width='25' height='6.5' fill='#6aaee6' stroke='#3b88c8' stroke-width='1.2'/>
<rect x='28.5' y='46.5' width='25' height='6.5' fill='#6aaee6' stroke='#3b88c8' stroke-width='1.2'/></svg><svg class='i' style='left:2060px;top:130px;z-index:4;' width='56' height='56' viewBox='0 0 56 56'><circle cx='28' cy='28' r='28' fill='#1e88e5'/><circle cx='28' cy='16' r='4' fill='#fff'/><rect x='24' y='24' width='8' height='20' fill='#fff'/></svg><svg class='i' style='left:2178px;top:126px;z-index:4;' width='64' height='64' viewBox='0 0 64 64'><rect x='0' y='0' width='64' height='64' rx='4' fill='#000'/><path d='M4,56.4 L26,7.6 H37 L17.6,56.4Z' fill='#ffb81c'/><path d='M34,24 L39,10 L60,56.4 H46Z' fill='#fff'/></svg><svg class='i' style='left:2328px;top:128px;z-index:4;' width='60' height='60' viewBox='0 0 60 60'><defs><clipPath id='rsL'><path d='M0,0 H22 V38 H60 V60 H0Z'/></clipPath></defs>
<g clip-path='url(#rsL)'><rect x='0' y='0' width='60' height='60' fill='#42b8f2'/><circle cx='21' cy='39' r='34' fill='#22cce0'/><circle cx='21' cy='39' r='28' fill='#70d96d'/><circle cx='21' cy='39' r='22' fill='#e9e227'/><circle cx='21' cy='39' r='16' fill='#f6a660'/><circle cx='21' cy='39' r='10' fill='#e8736f'/></g>
<path d='M0.5,0.5 H21.5 V38.5 H59.5 V59.5 H0.5Z' fill='none' stroke='#4aa0d0' stroke-width='1'/></svg><svg class='i' style='left:2488px;top:142px;z-index:4;' width='56' height='34' viewBox='0 0 56 34'><path d='M1,0 V18 M55,0 V18' stroke='#666' stroke-width='1.8'/><path d='M3,9 H53' stroke='#666' stroke-width='1.8'/>
<path d='M2,9 L10,5 V13Z M54,9 L46,5 V13Z' fill='#666'/>
<rect x='0.5' y='20.5' width='55' height='11' fill='#f7a800' stroke='#dc9200' stroke-width='1'/>
<path d='M9,20 V25 M15,20 V23 M21,20 V25 M27,20 V23 M33,20 V25 M39,20 V23 M45,20 V25 M51,20 V23' stroke='#665020' stroke-width='1.2'/></svg><svg class='i' style='left:2632px;top:120px;z-index:4;' width='76' height='76' viewBox='0 0 76 76'><rect width='76' height='76' fill='#0796d8'/><rect x='7' y='7' width='55' height='42' fill='none' stroke='#63d97a' stroke-width='2' stroke-dasharray='5 4'/>
<path d='M48,34 L48,66 L55,59 L60,70 L66,67 L61,56 L70,56Z' fill='#fff'/></svg><div class='r' style='left:8px;top:244px;width:600px;height:50px;background:#f1f1f1;z-index:2;border-top:1px solid #d0d0d0;border-left:1px solid #d0d0d0;border-right:2px solid #c6c6c6;border-bottom:2px solid #c6c6c6;box-sizing:border-box;'></div><svg class='i' style='left:18px;top:264px;z-index:4;' width='21' height='13' viewBox='0 0 21 13'><path d='M0,6.5 L9,0 V13Z M10,6.5 L19,0 V13Z' fill='#333'/><rect x='8' y='0' width='2' height='13' fill='#333'/><rect x='19' y='0' width='2' height='13' fill='#333'/></svg><div class='t' style='left:57.41px;top:256.08px;font-size:24.71px;line-height:24.71px;color:#666;font-weight:400;z-index:5;transform:scaleX(0.7933);transform-origin:0 0;'>BROWSER</div><svg class='i' style='left:566px;top:260px;z-index:4;' width='18' height='18' viewBox='0 0 18 18'><circle cx='9' cy='9' r='9' fill='#333'/><rect x='4' y='8' width='10' height='2.4' fill='#eee'/></svg><div class='r' style='left:598px;top:258px;width:2px;height:22px;background:#888;z-index:3;'></div><div class='r' style='left:602px;top:262px;width:2px;height:14px;background:#888;z-index:3;'></div><svg class='i' style='left:47px;top:317px;z-index:4;' width='15' height='15' viewBox='0 0 15 15'><defs><linearGradient id='tg' x1='0' y1='0' x2='1' y2='0'><stop offset='0' stop-color='#eee'/><stop offset='1' stop-color='#222'/></linearGradient></defs><path d='M14,1 V14 H1Z' fill='url(#tg)' stroke='#111' stroke-width='1.6' stroke-linejoin='round'/></svg><div class='r' style='left:82px;top:304px;width:212px;height:40px;background:#f1f1f1;z-index:2;'></div><div class='r' style='left:82px;top:344px;width:212px;height:8px;background:linear-gradient(#fbfbfb,#ffffff);z-index:1;'></div><svg class='i' style='left:91px;top:312px;z-index:4;' width='28' height='25' viewBox='0 0 28 25'><defs><radialGradient id='cb1' cx='17.8' cy='0.5' r='17' gradientUnits='userSpaceOnUse'><stop offset='0' stop-color='#ee3535'/><stop offset='0.22' stop-color='#ee3535'/><stop offset='0.22' stop-color='#f7901e'/><stop offset='0.47' stop-color='#f7901e'/><stop offset='0.47' stop-color='#f5e23a'/><stop offset='0.73' stop-color='#f5e23a'/><stop offset='0.73' stop-color='#6ade6a'/><stop offset='0.85' stop-color='#6ade6a'/><stop offset='0.85' stop-color='#40d8f0'/><stop offset='0.94' stop-color='#40d8f0'/><stop offset='0.94' stop-color='#3a78e8'/><stop offset='1' stop-color='#3a78e8'/></radialGradient><radialGradient id='cb2' cx='17.8' cy='14.5' r='17' gradientUnits='userSpaceOnUse'><stop offset='0' stop-color='#ee3535'/><stop offset='0.22' stop-color='#ee3535'/><stop offset='0.22' stop-color='#f7901e'/><stop offset='0.47' stop-color='#f7901e'/><stop offset='0.47' stop-color='#f5e23a'/><stop offset='0.73' stop-color='#f5e23a'/><stop offset='0.73' stop-color='#6ade6a'/><stop offset='0.85' stop-color='#6ade6a'/><stop offset='0.85' stop-color='#40d8f0'/><stop offset='0.94' stop-color='#40d8f0'/><stop offset='0.94' stop-color='#3a78e8'/><stop offset='1' stop-color='#3a78e8'/></radialGradient></defs>
<rect x='0.7' y='0.7' width='26.6' height='9.6' fill='url(#cb1)' stroke='#333' stroke-width='1.2'/><rect x='0.7' y='14.7' width='26.6' height='9.6' fill='url(#cb2)' stroke='#333' stroke-width='1.2'/></svg><div class='t' style='left:147.53px;top:312.58px;font-size:24.71px;line-height:24.71px;color:#333;font-weight:400;z-index:5;transform:scaleX(0.9657);transform-origin:0 0;-webkit-text-stroke:0.3px #333;'>Simulations</div><div class='r' style='left:118px;top:352px;width:236px;height:40px;background:#f1f1f1;z-index:2;'></div><div class='r' style='left:118px;top:392px;width:236px;height:8px;background:linear-gradient(#fbfbfb,#ffffff);z-index:1;'></div><svg class='i' style='left:125px;top:356px;z-index:4;' width='30' height='31' viewBox='0 0 30 31'><defs><linearGradient id='dg' x1='0' y1='0' x2='0' y2='1'><stop offset='0' stop-color='#fff'/><stop offset='1' stop-color='#aab0c0'/></linearGradient></defs><path d='M3.5,0.7 H17 L23,7 V24 H3.5Z' fill='url(#dg)' stroke='#444' stroke-width='1.2'/><path d='M17,0.7 V7 H23' fill='none' stroke='#444' stroke-width='1'/><rect x='0.7' y='24' width='28' height='6' rx='1' fill='#f2c020' stroke='#a07010' stroke-width='1'/><path d='M4,24 V26.5 M8,24 V26.5 M12,24 V26.5 M16,24 V26.5 M20,24 V26.5 M24,24 V26.5' stroke='#805000' stroke-width='0.8'/></svg><div class='t' style='left:184.02px;top:360.58px;font-size:24.71px;line-height:24.71px;color:#333;font-weight:400;z-index:5;transform:scaleX(0.9768);transform-origin:0 0;-webkit-text-stroke:0.3px #333;'>Units: Custom</div><svg class='i' style='left:83px;top:413px;z-index:4;' width='15' height='15' viewBox='0 0 15 15'><defs><linearGradient id='tg' x1='0' y1='0' x2='1' y2='0'><stop offset='0' stop-color='#eee'/><stop offset='1' stop-color='#222'/></linearGradient></defs><path d='M14,1 V14 H1Z' fill='url(#tg)' stroke='#111' stroke-width='1.6' stroke-linejoin='round'/></svg><div class='r' style='left:118px;top:400px;width:400px;height:40px;background:#f1f1f1;z-index:2;'></div><div class='r' style='left:118px;top:440px;width:400px;height:8px;background:linear-gradient(#fbfbfb,#ffffff);z-index:1;'></div><svg class='i' style='left:124px;top:410px;z-index:4;' width='32' height='20' viewBox='0 0 32 20'><path d='M0,10 Q16,-6 32,10 Q16,26 0,10Z' fill='#999'/><circle cx='16' cy='10' r='5.3' fill='none' stroke='#f1f1f1' stroke-width='1.9'/></svg><div class='r' style='left:168px;top:404px;width:300px;height:32px;background:#9b9b9b;z-index:3;'></div><svg class='i' style='left:174px;top:404px;z-index:4;' width='30' height='30' viewBox='0 0 30 30'><defs><linearGradient id='cg' x1='0' y1='0' x2='0' y2='1'><stop offset='0' stop-color='#f6f6f8'/><stop offset='1' stop-color='#d6d9de'/></linearGradient></defs>
<path d='M0.6,5.5 L5.5,0.6 H17 V13 L12,18 V29.4 H0.6Z' fill='url(#cg)' stroke='#333' stroke-width='1.1' stroke-linejoin='round'/>
<path d='M0.6,5.5 H12 L17,0.6 M12,5.5 V18 M0.6,17.8 H12' fill='none' stroke='#666' stroke-width='0.8'/>
<path d='M12,18 L17,13 H29.4 V24.5 L24.5,29.4 H12Z' fill='url(#cg)' stroke='#333' stroke-width='1.1' stroke-linejoin='round'/>
<path d='M12,18 H24.5 L29.4,13 M24.5,18 V29.4' fill='none' stroke='#666' stroke-width='0.8'/>
<path d='M12.6,5.5 L17,1 V12.5 L12.6,17Z M25,18 L29,14 V24.2 L25,28.8Z' fill='#c8ccd2'/></svg><div class='t' style='left:234.00px;top:408.58px;font-size:24.71px;line-height:24.71px;color:#fff;font-weight:700;z-index:5;transform:scaleX(0.9585);transform-origin:0 0;'>Simulation Model 1</div><svg class='i' style='left:476px;top:405px;z-index:4;' width='28' height='28' viewBox='0 0 28 28'><defs><radialGradient id='rg' cx='0.5' cy='0.3' r='0.7'><stop offset='0' stop-color='#fff'/><stop offset='1' stop-color='#b8bcc8'/></radialGradient></defs><circle cx='14' cy='14' r='12.5' fill='url(#rg)' stroke='#333' stroke-width='1.4'/><circle cx='14' cy='14' r='5.5' fill='#3a3a3a'/></svg><svg class='i' style='left:120px;top:459px;z-index:4;' width='13' height='19' viewBox='0 0 13 19'><path d='M1,1 L12,9.5 L1,18Z' fill='#fff' stroke='#111' stroke-width='1.6' stroke-linejoin='round'/></svg><div class='r' style='left:154px;top:448px;width:228px;height:40px;background:#f1f1f1;z-index:2;'></div><div class='r' style='left:154px;top:488px;width:228px;height:8px;background:linear-gradient(#fbfbfb,#ffffff);z-index:1;'></div><svg class='i' style='left:160px;top:455px;z-index:4;' width='32' height='26' viewBox='0 0 32 26'><path d='M0,0 H14 L15.2,2.3 L13.5,3.9 H0Z' fill='#999'/><path d='M0,7 H14.7 L19.2,2.4 H31.8 V25.7 H0Z' fill='#999'/></svg><div class='t' style='left:219.12px;top:456.58px;font-size:24.71px;line-height:24.71px;color:#333;font-weight:400;z-index:5;transform:scaleX(0.9399);transform-origin:0 0;-webkit-text-stroke:0.3px #333;'>Named Views</div><svg class='i' style='left:120px;top:507px;z-index:4;' width='13' height='19' viewBox='0 0 13 19'><path d='M1,1 L12,9.5 L1,18Z' fill='#fff' stroke='#111' stroke-width='1.6' stroke-linejoin='round'/></svg><div class='r' style='left:154px;top:496px;width:198px;height:40px;background:#f1f1f1;z-index:2;'></div><div class='r' style='left:154px;top:536px;width:198px;height:8px;background:linear-gradient(#fbfbfb,#ffffff);z-index:1;'></div><svg class='i' style='left:160px;top:503px;z-index:4;' width='32' height='26' viewBox='0 0 32 26'><path d='M0,13 Q16,-3 32,13 Q16,29 0,13Z' fill='#dedede'/><circle cx='16' cy='13' r='5.2' fill='none' stroke='#f1f1f1' stroke-width='2.6'/><path d='M5,2 L27,24' stroke='#f1f1f1' stroke-width='5'/><path d='M5,2 L27,24' stroke='#d6d6d6' stroke-width='2.4'/></svg><svg class='i' style='left:210px;top:503px;z-index:4;' width='32' height='26' viewBox='0 0 32 26'><path d='M0,0 H14 L15.2,2.3 L13.5,3.9 H0Z' fill='#999'/><path d='M0,7 H14.7 L19.2,2.4 H31.8 V25.7 H0Z' fill='#999'/></svg><div class='t' style='left:269.60px;top:504.58px;font-size:24.71px;line-height:24.71px;color:#333;font-weight:400;z-index:5;transform:scaleX(1.0038);transform-origin:0 0;-webkit-text-stroke:0.3px #333;'>Origin</div><svg class='i' style='left:120px;top:555px;z-index:4;' width='13' height='19' viewBox='0 0 13 19'><path d='M1,1 L12,9.5 L1,18Z' fill='#fff' stroke='#111' stroke-width='1.6' stroke-linejoin='round'/></svg><div class='r' style='left:154px;top:544px;width:270px;height:40px;background:#f1f1f1;z-index:2;'></div><div class='r' style='left:154px;top:584px;width:270px;height:8px;background:linear-gradient(#fbfbfb,#ffffff);z-index:1;'></div><svg class='i' style='left:160px;top:554px;z-index:4;' width='32' height='20' viewBox='0 0 32 20'><path d='M0,10 Q16,-6 32,10 Q16,26 0,10Z' fill='#999'/><circle cx='16' cy='10' r='5.3' fill='none' stroke='#f1f1f1' stroke-width='1.9'/></svg><svg class='i' style='left:210px;top:551px;z-index:4;' width='32' height='26' viewBox='0 0 32 26'><path d='M0,0 H14 L15.2,2.3 L13.5,3.9 H0Z' fill='#999'/><path d='M0,7 H14.7 L19.2,2.4 H31.8 V25.7 H0Z' fill='#999'/></svg><div class='t' style='left:269.61px;top:552.58px;font-size:24.71px;line-height:24.71px;color:#333;font-weight:400;z-index:5;transform:scaleX(0.9888);transform-origin:0 0;-webkit-text-stroke:0.3px #333;'>Construction</div><svg class='i' style='left:120px;top:603px;z-index:4;' width='13' height='19' viewBox='0 0 13 19'><path d='M1,1 L12,9.5 L1,18Z' fill='#fff' stroke='#111' stroke-width='1.6' stroke-linejoin='round'/></svg><div class='r' style='left:154px;top:592px;width:292px;height:40px;background:#f1f1f1;z-index:2;'></div><div class='r' style='left:154px;top:632px;width:292px;height:8px;background:linear-gradient(#fbfbfb,#ffffff);z-index:1;'></div><svg class='i' style='left:160px;top:599px;z-index:4;' width='32' height='26' viewBox='0 0 32 26'><path d='M0,0 H14 L15.2,2.3 L13.5,3.9 H0Z' fill='#999'/><path d='M0,7 H14.7 L19.2,2.4 H31.8 V25.7 H0Z' fill='#999'/></svg><div class='t' style='left:219.06px;top:600.58px;font-size:24.71px;line-height:24.71px;color:#333;font-weight:400;z-index:5;transform:scaleX(0.9676);transform-origin:0 0;-webkit-text-stroke:0.3px #333;'>Model Components</div><svg class='i' style='left:120px;top:651px;z-index:4;' width='13' height='19' viewBox='0 0 13 19'><path d='M1,1 L12,9.5 L1,18Z' fill='#fff' stroke='#111' stroke-width='1.6' stroke-linejoin='round'/></svg><div class='r' style='left:154px;top:640px;width:374px;height:40px;background:#f1f1f1;z-index:2;'></div><div class='r' style='left:154px;top:680px;width:374px;height:8px;background:linear-gradient(#fbfbfb,#ffffff);z-index:1;'></div><svg class='i' style='left:161px;top:645px;z-index:4;' width='30' height='30' viewBox='0 0 30 30'><defs><linearGradient id='wg' x1='0' y1='0' x2='0' y2='1'><stop offset='0' stop-color='#fff6a0'/><stop offset='1' stop-color='#f2d020'/></linearGradient></defs><path d='M15,1.5 L28.5,27 Q29,28.5 27.5,28.5 H2.5 Q1,28.5 1.5,27Z' fill='url(#wg)' stroke='#8a5a1a' stroke-width='1.4' stroke-linejoin='round'/><path d='M13.6,9 H16.4 L15.8,19 H14.2Z' fill='#333'/><circle cx='15' cy='22.8' r='1.8' fill='#333'/></svg><svg class='i' style='left:212px;top:646px;z-index:4;' width='31' height='31' viewBox='0 0 31 31'><defs><clipPath id='sL640'><path d='M0.5,20.5 H20.5 V0.5 H30.5 V30.5 H0.5Z'/></clipPath><radialGradient id='sg' cx='21' cy='20.4' r='22' gradientUnits='userSpaceOnUse'><stop offset='0' stop-color='#f03a3a'/><stop offset='0.17' stop-color='#f03a3a'/><stop offset='0.2' stop-color='#f7901e'/><stop offset='0.3' stop-color='#f7901e'/><stop offset='0.34' stop-color='#f2e030'/><stop offset='0.48' stop-color='#f2e030'/><stop offset='0.53' stop-color='#70dc6a'/><stop offset='0.66' stop-color='#70dc6a'/><stop offset='0.71' stop-color='#38d2f0'/><stop offset='0.84' stop-color='#38d2f0'/><stop offset='0.9' stop-color='#3060e0'/><stop offset='1' stop-color='#3060e0'/></radialGradient></defs>
<path d='M0.5,20.5 H20.5 V0.5 H30.5 V30.5 H0.5Z' fill='url(#sg)' stroke='#111' stroke-width='1.6'/></svg><div class='t' style='left:269.46px;top:648.58px;font-size:24.71px;line-height:24.71px;color:#333;font-weight:400;z-index:5;transform:scaleX(0.9375);transform-origin:0 0;-webkit-text-stroke:0.3px #333;'>Study 1 – Static Stress</div><svg class='i' style='left:120px;top:699px;z-index:4;' width='13' height='19' viewBox='0 0 13 19'><path d='M1,1 L12,9.5 L1,18Z' fill='#fff' stroke='#111' stroke-width='1.6' stroke-linejoin='round'/></svg><div class='r' style='left:154px;top:688px;width:374px;height:40px;background:#f1f1f1;z-index:2;'></div><div class='r' style='left:154px;top:728px;width:374px;height:8px;background:linear-gradient(#fbfbfb,#ffffff);z-index:1;'></div><svg class='i' style='left:161px;top:693px;z-index:4;' width='30' height='30' viewBox='0 0 30 30'><defs><linearGradient id='wg' x1='0' y1='0' x2='0' y2='1'><stop offset='0' stop-color='#fff6a0'/><stop offset='1' stop-color='#f2d020'/></linearGradient></defs><path d='M15,1.5 L28.5,27 Q29,28.5 27.5,28.5 H2.5 Q1,28.5 1.5,27Z' fill='url(#wg)' stroke='#8a5a1a' stroke-width='1.4' stroke-linejoin='round'/><path d='M13.6,9 H16.4 L15.8,19 H14.2Z' fill='#333'/><circle cx='15' cy='22.8' r='1.8' fill='#333'/></svg><svg class='i' style='left:212px;top:694px;z-index:4;' width='31' height='31' viewBox='0 0 31 31'><defs><clipPath id='sL688'><path d='M0.5,20.5 H20.5 V0.5 H30.5 V30.5 H0.5Z'/></clipPath><radialGradient id='sg' cx='21' cy='20.4' r='22' gradientUnits='userSpaceOnUse'><stop offset='0' stop-color='#f03a3a'/><stop offset='0.17' stop-color='#f03a3a'/><stop offset='0.2' stop-color='#f7901e'/><stop offset='0.3' stop-color='#f7901e'/><stop offset='0.34' stop-color='#f2e030'/><stop offset='0.48' stop-color='#f2e030'/><stop offset='0.53' stop-color='#70dc6a'/><stop offset='0.66' stop-color='#70dc6a'/><stop offset='0.71' stop-color='#38d2f0'/><stop offset='0.84' stop-color='#38d2f0'/><stop offset='0.9' stop-color='#3060e0'/><stop offset='1' stop-color='#3060e0'/></radialGradient></defs>
<path d='M0.5,20.5 H20.5 V0.5 H30.5 V30.5 H0.5Z' fill='url(#sg)' stroke='#111' stroke-width='1.6'/></svg><div class='t' style='left:269.46px;top:696.58px;font-size:24.71px;line-height:24.71px;color:#333;font-weight:400;z-index:5;transform:scaleX(0.9375);transform-origin:0 0;-webkit-text-stroke:0.3px #333;'>Study 2 – Static Stress</div><svg class='i' style='left:119px;top:749px;z-index:4;' width='15' height='15' viewBox='0 0 15 15'><defs><linearGradient id='tg' x1='0' y1='0' x2='1' y2='0'><stop offset='0' stop-color='#eee'/><stop offset='1' stop-color='#222'/></linearGradient></defs><path d='M14,1 V14 H1Z' fill='url(#tg)' stroke='#111' stroke-width='1.6' stroke-linejoin='round'/></svg><div class='r' style='left:154px;top:736px;width:390px;height:40px;background:#f1f1f1;z-index:2;'></div><div class='r' style='left:154px;top:776px;width:390px;height:8px;background:linear-gradient(#fbfbfb,#ffffff);z-index:1;'></div><div class='r' style='left:158px;top:740px;width:386px;height:32px;background:#888888;z-index:3;'></div><svg class='i' style='left:161px;top:740px;z-index:4;' width='32' height='32' viewBox='0 0 32 32'><circle cx='16' cy='16' r='14.5' fill='#6aa418' stroke='#f4f4f4' stroke-width='1' stroke-dasharray='1.5 1.5'/><circle cx='16' cy='16' r='13.6' fill='none' stroke='#2f5a08' stroke-width='0.8'/><path d='M8.5,16.5 L13.5,21.5 L23.5,11' stroke='#fff' stroke-width='3.6' fill='none' stroke-linecap='round' stroke-linejoin='round'/></svg><svg class='i' style='left:212px;top:742px;z-index:4;' width='31' height='31' viewBox='0 0 31 31'><defs><radialGradient id='sg3' cx='21' cy='20.4' r='22' gradientUnits='userSpaceOnUse'><stop offset='0' stop-color='#f03a3a'/><stop offset='0.17' stop-color='#f03a3a'/><stop offset='0.2' stop-color='#f7901e'/><stop offset='0.3' stop-color='#f7901e'/><stop offset='0.34' stop-color='#f2e030'/><stop offset='0.48' stop-color='#f2e030'/><stop offset='0.53' stop-color='#70dc6a'/><stop offset='0.66' stop-color='#70dc6a'/><stop offset='0.71' stop-color='#38d2f0'/><stop offset='0.84' stop-color='#38d2f0'/><stop offset='0.9' stop-color='#3060e0'/><stop offset='1' stop-color='#3060e0'/></radialGradient></defs><path d='M0.5,20.5 H20.5 V0.5 H30.5 V30.5 H0.5Z' fill='url(#sg3)' stroke='#111' stroke-width='1.6'/></svg><div class='t' style='left:270.00px;top:744.58px;font-size:24.71px;line-height:24.71px;color:#fff;font-weight:700;z-index:5;transform:scaleX(0.9450);transform-origin:0 0;'>Study 3 – Static Stress</div><svg class='i' style='left:156px;top:795px;z-index:4;' width='13' height='19' viewBox='0 0 13 19'><path d='M1,1 L12,9.5 L1,18Z' fill='#fff' stroke='#111' stroke-width='1.6' stroke-linejoin='round'/></svg><div class='r' style='left:190px;top:784px;width:302px;height:40px;background:#f1f1f1;z-index:2;'></div><div class='r' style='left:190px;top:824px;width:302px;height:8px;background:linear-gradient(#fbfbfb,#ffffff);z-index:1;'></div><svg class='i' style='left:196px;top:794px;z-index:4;' width='32' height='20' viewBox='0 0 32 20'><path d='M0,10 Q16,-6 32,10 Q16,26 0,10Z' fill='#999'/><circle cx='16' cy='10' r='5.3' fill='none' stroke='#f1f1f1' stroke-width='1.9'/></svg><svg class='i' style='left:246px;top:788px;z-index:4;' width='32' height='32' viewBox='0 0 32 32'><defs><clipPath id='bsp'><circle cx='16' cy='16' r='15.5'/></clipPath></defs><circle cx='16' cy='16' r='15.5' fill='#fff'/><g clip-path='url(#bsp)'><path d='M4.8,4.8 L5.5,4.2 L6.2,3.6 L6.8,3.1 L7.5,2.7 L8.2,2.3 L8.8,1.9 L8.8,1.9 L8.4,2.8 L8.1,3.6 L7.8,4.4 L7.5,5.3 L7.2,6.1 L7.0,7.0 L7.0,7.0 L6.1,7.2 L5.3,7.5 L4.4,7.8 L3.6,8.1 L2.8,8.4 L1.9,8.8 L1.9,8.8 L2.3,8.2 L2.7,7.5 L3.1,6.8 L3.6,6.2 L4.2,5.5 L4.8,4.8Z' fill='#666'/><path d='M0.4,13.8 L1.3,13.6 L2.2,13.5 L3.2,13.4 L4.1,13.3 L5.1,13.3 L6.0,13.2 L6.0,13.2 L5.9,14.1 L5.9,15.1 L5.9,16.0 L5.9,16.9 L5.9,17.9 L6.0,18.8 L6.0,18.8 L5.1,18.7 L4.1,18.7 L3.2,18.6 L2.2,18.5 L1.3,18.4 L0.4,18.2 L0.4,18.2 L0.3,17.5 L0.2,16.7 L0.2,16.0 L0.2,15.3 L0.3,14.5 L0.4,13.8Z' fill='#666'/><path d='M1.9,23.2 L2.8,23.6 L3.6,23.9 L4.4,24.2 L5.3,24.5 L6.1,24.8 L7.0,25.0 L7.0,25.0 L7.2,25.9 L7.5,26.7 L7.8,27.6 L8.1,28.4 L8.4,29.2 L8.8,30.1 L8.8,30.1 L8.2,29.7 L7.5,29.3 L6.8,28.9 L6.2,28.4 L5.5,27.8 L4.8,27.2 L4.8,27.2 L4.2,26.5 L3.6,25.8 L3.1,25.2 L2.7,24.5 L2.3,23.8 L1.9,23.2Z' fill='#666'/><path d='M7.0,7.0 L8.0,6.7 L9.0,6.5 L10.1,6.3 L11.1,6.2 L12.1,6.1 L13.2,6.0 L13.2,6.0 L13.1,7.1 L13.0,8.3 L13.0,9.4 L12.9,10.6 L12.9,11.7 L12.9,12.9 L12.9,12.9 L11.7,12.9 L10.6,12.9 L9.4,13.0 L8.3,13.0 L7.1,13.1 L6.0,13.2 L6.0,13.2 L6.1,12.1 L6.2,11.1 L6.3,10.1 L6.5,9.0 L6.7,8.0 L7.0,7.0Z' fill='#666'/><path d='M6.0,18.8 L7.1,18.9 L8.3,19.0 L9.4,19.0 L10.6,19.1 L11.7,19.1 L12.9,19.1 L12.9,19.1 L12.9,20.3 L12.9,21.4 L13.0,22.6 L13.0,23.7 L13.1,24.9 L13.2,26.0 L13.2,26.0 L12.1,25.9 L11.1,25.8 L10.1,25.7 L9.0,25.5 L8.0,25.3 L7.0,25.0 L7.0,25.0 L6.7,24.0 L6.5,23.0 L6.3,21.9 L6.2,20.9 L6.1,19.9 L6.0,18.8Z' fill='#666'/><path d='M13.8,0.4 L14.5,0.3 L15.3,0.2 L16.0,0.2 L16.7,0.2 L17.5,0.3 L18.2,0.4 L18.2,0.4 L18.4,1.3 L18.5,2.2 L18.6,3.2 L18.7,4.1 L18.7,5.1 L18.8,6.0 L18.8,6.0 L17.9,5.9 L16.9,5.9 L16.0,5.9 L15.1,5.9 L14.1,5.9 L13.2,6.0 L13.2,6.0 L13.3,5.1 L13.3,4.1 L13.4,3.2 L13.5,2.2 L13.6,1.3 L13.8,0.4Z' fill='#666'/><path d='M12.9,12.9 L13.9,12.9 L15.0,12.8 L16.0,12.8 L17.0,12.8 L18.1,12.9 L19.1,12.9 L19.1,12.9 L19.1,13.9 L19.2,15.0 L19.2,16.0 L19.2,17.0 L19.1,18.1 L19.1,19.1 L19.1,19.1 L18.1,19.1 L17.0,19.2 L16.0,19.2 L15.0,19.2 L13.9,19.1 L12.9,19.1 L12.9,19.1 L12.9,18.1 L12.8,17.0 L12.8,16.0 L12.8,15.0 L12.9,13.9 L12.9,12.9Z' fill='#666'/><path d='M13.2,26.0 L14.1,26.1 L15.1,26.1 L16.0,26.1 L16.9,26.1 L17.9,26.1 L18.8,26.0 L18.8,26.0 L18.7,26.9 L18.7,27.9 L18.6,28.8 L18.5,29.8 L18.4,30.7 L18.2,31.6 L18.2,31.6 L17.5,31.7 L16.7,31.8 L16.0,31.8 L15.3,31.8 L14.5,31.7 L13.8,31.6 L13.8,31.6 L13.6,30.7 L13.5,29.8 L13.4,28.8 L13.3,27.9 L13.3,26.9 L13.2,26.0Z' fill='#666'/><path d='M18.8,6.0 L19.9,6.1 L20.9,6.2 L21.9,6.3 L23.0,6.5 L24.0,6.7 L25.0,7.0 L25.0,7.0 L25.3,8.0 L25.5,9.0 L25.7,10.1 L25.8,11.1 L25.9,12.1 L26.0,13.2 L26.0,13.2 L24.9,13.1 L23.7,13.0 L22.6,13.0 L21.4,12.9 L20.3,12.9 L19.1,12.9 L19.1,12.9 L19.1,11.7 L19.1,10.6 L19.0,9.4 L19.0,8.3 L18.9,7.1 L18.8,6.0Z' fill='#666'/><path d='M19.1,19.1 L20.3,19.1 L21.4,19.1 L22.6,19.0 L23.7,19.0 L24.9,18.9 L26.0,18.8 L26.0,18.8 L25.9,19.9 L25.8,20.9 L25.7,21.9 L25.5,23.0 L25.3,24.0 L25.0,25.0 L25.0,25.0 L24.0,25.3 L23.0,25.5 L21.9,25.7 L20.9,25.8 L19.9,25.9 L18.8,26.0 L18.8,26.0 L18.9,24.9 L19.0,23.7 L19.0,22.6 L19.1,21.4 L19.1,20.3 L19.1,19.1Z' fill='#666'/><path d='M23.2,1.9 L23.8,2.3 L24.5,2.7 L25.2,3.1 L25.8,3.6 L26.5,4.2 L27.2,4.8 L27.2,4.8 L27.8,5.5 L28.4,6.2 L28.9,6.8 L29.3,7.5 L29.7,8.2 L30.1,8.8 L30.1,8.8 L29.2,8.4 L28.4,8.1 L27.6,7.8 L26.7,7.5 L25.9,7.2 L25.0,7.0 L25.0,7.0 L24.8,6.1 L24.5,5.3 L24.2,4.4 L23.9,3.6 L23.6,2.8 L23.2,1.9Z' fill='#666'/><path d='M26.0,13.2 L26.9,13.3 L27.9,13.3 L28.8,13.4 L29.8,13.5 L30.7,13.6 L31.6,13.8 L31.6,13.8 L31.7,14.5 L31.8,15.3 L31.8,16.0 L31.8,16.7 L31.7,17.5 L31.6,18.2 L31.6,18.2 L30.7,18.4 L29.8,18.5 L28.8,18.6 L27.9,18.7 L26.9,18.7 L26.0,18.8 L26.0,18.8 L26.1,17.9 L26.1,16.9 L26.1,16.0 L26.1,15.1 L26.1,14.1 L26.0,13.2Z' fill='#666'/><path d='M25.0,25.0 L25.9,24.8 L26.7,24.5 L27.6,24.2 L28.4,23.9 L29.2,23.6 L30.1,23.2 L30.1,23.2 L29.7,23.8 L29.3,24.5 L28.9,25.2 L28.4,25.8 L27.8,26.5 L27.2,27.2 L27.2,27.2 L26.5,27.8 L25.8,28.4 L25.2,28.9 L24.5,29.3 L23.8,29.7 L23.2,30.1 L23.2,30.1 L23.6,29.2 L23.9,28.4 L24.2,27.6 L24.5,26.7 L24.8,25.9 L25.0,25.0Z' fill='#666'/></g><circle cx='16' cy='16' r='15.3' fill='none' stroke='#777' stroke-width='1'/></svg><div class='t' style='left:305.04px;top:792.58px;font-size:24.71px;line-height:24.71px;color:#333;font-weight:400;z-index:5;transform:scaleX(0.9568);transform-origin:0 0;-webkit-text-stroke:0.3px #333;'>Study Materials</div><svg class='i' style='left:156px;top:843px;z-index:4;' width='13' height='19' viewBox='0 0 13 19'><path d='M1,1 L12,9.5 L1,18Z' fill='#fff' stroke='#111' stroke-width='1.6' stroke-linejoin='round'/></svg><div class='r' style='left:190px;top:832px;width:312px;height:40px;background:#f1f1f1;z-index:2;'></div><div class='r' style='left:190px;top:872px;width:312px;height:8px;background:linear-gradient(#fbfbfb,#ffffff);z-index:1;'></div><svg class='i' style='left:196px;top:842px;z-index:4;' width='32' height='20' viewBox='0 0 32 20'><path d='M0,10 Q16,-6 32,10 Q16,26 0,10Z' fill='#999'/><circle cx='16' cy='10' r='5.3' fill='none' stroke='#f1f1f1' stroke-width='1.9'/></svg><div class='r' style='left:240px;top:836px;width:212px;height:32px;background:#888888;z-index:3;'></div><svg class='i' style='left:247px;top:837px;z-index:4;' width='30' height='31' viewBox='0 0 30 31'><defs><linearGradient id='lg' x1='0' y1='0' x2='0' y2='1'><stop offset='0' stop-color='#f4f4f6'/><stop offset='1' stop-color='#b0b6c6'/></linearGradient></defs><rect x='0.7' y='0.7' width='28' height='29' rx='1' fill='url(#lg)' stroke='#222' stroke-width='1.2'/><rect x='1.5' y='1.5' width='26.5' height='4' fill='#9aa0b0'/><path d='M14.5,9 V16' stroke='#2060d0' stroke-width='1.4'/><path d='M12,14 H17 L14.5,18Z' fill='#2060d0'/><rect x='5' y='18.5' width='19' height='3' rx='1.5' fill='#fff' stroke='#333' stroke-width='0.9'/><path d='M10.5,27 L14.5,22 L18.5,27Z' fill='#fff' stroke='#333' stroke-width='0.9'/></svg><div class='t' style='left:306.08px;top:840.58px;font-size:24.71px;line-height:24.71px;color:#fff;font-weight:700;z-index:5;transform:scaleX(0.9208);transform-origin:0 0;'>Load Case1</div><svg class='i' style='left:460px;top:837px;z-index:4;' width='28' height='28' viewBox='0 0 28 28'><defs><radialGradient id='rg' cx='0.5' cy='0.3' r='0.7'><stop offset='0' stop-color='#fff'/><stop offset='1' stop-color='#b8bcc8'/></radialGradient></defs><circle cx='14' cy='14' r='12.5' fill='url(#rg)' stroke='#333' stroke-width='1.4'/><circle cx='14' cy='14' r='5.5' fill='#3a3a3a'/></svg><div class='r' style='left:190px;top:880px;width:180px;height:40px;background:#f1f1f1;z-index:2;'></div><div class='r' style='left:190px;top:920px;width:180px;height:8px;background:linear-gradient(#fbfbfb,#ffffff);z-index:1;'></div><svg class='i' style='left:197px;top:894px;z-index:4;' width='31' height='12' viewBox='0 0 31 12'><rect x='0.7' y='0.7' width='29.6' height='10' rx='1' fill='#7fa8dd' stroke='#1e44a0' stroke-width='1.3'/><rect x='1.4' y='1.4' width='14' height='8.6' fill='#e8e8ec'/><path d='M15.4,1 V10.5' stroke='#1e44a0' stroke-width='1.1'/></svg><div class='t' style='left:255.65px;top:888.58px;font-size:24.71px;line-height:24.71px;color:#333;font-weight:400;z-index:5;transform:scaleX(0.9508);transform-origin:0 0;-webkit-text-stroke:0.3px #333;'>Contacts</div><div class='r' style='left:190px;top:928px;width:190px;height:40px;background:#f1f1f1;z-index:2;'></div><div class='r' style='left:190px;top:968px;width:190px;height:8px;background:linear-gradient(#fbfbfb,#ffffff);z-index:1;'></div><svg class='i' style='left:196px;top:935px;z-index:4;' width='32' height='26' viewBox='0 0 32 26'><path d='M0,13 Q16,-3 32,13 Q16,29 0,13Z' fill='#dedede'/><circle cx='16' cy='13' r='5.2' fill='none' stroke='#f1f1f1' stroke-width='2.6'/><path d='M5,2 L27,24' stroke='#f1f1f1' stroke-width='5'/><path d='M5,2 L27,24' stroke='#d6d6d6' stroke-width='2.4'/></svg><svg class='i' style='left:249px;top:934px;z-index:4;' width='28' height='28' viewBox='0 0 28 28'><path d='M0.5,0.5 H14 V14 H27.5 V27.5 H0.5Z' fill='#d9c173' stroke='#a89040' stroke-width='1'/><path d='M0.5,14 H14 V27.5 M0.5,0.5 L14,14 M0.5,14 L14,27.5 M14,14 L27.5,27.5' stroke='#a89040' stroke-width='0.8' fill='none'/></svg><div class='t' style='left:305.13px;top:936.58px;font-size:24.71px;line-height:24.71px;color:#333;font-weight:400;z-index:5;transform:scaleX(0.9364);transform-origin:0 0;-webkit-text-stroke:0.3px #333;'>Mesh</div><div class='r' style='left:190px;top:976px;width:164px;height:40px;background:#f1f1f1;z-index:2;'></div><div class='r' style='left:190px;top:1016px;width:164px;height:8px;background:linear-gradient(#fbfbfb,#ffffff);z-index:1;'></div><svg class='i' style='left:204px;top:980px;z-index:4;' width='17' height='31' viewBox='0 0 17 31'><rect x='0.6' y='0.6' width='15.8' height='29.8' rx='1.5' fill='#333'/><rect x='1.6' y='1.6' width='13.8' height='6.5' fill='#d02828'/><rect x='1.6' y='8.1' width='13.8' height='6' fill='#ee8a20'/><rect x='1.6' y='14.1' width='13.8' height='5.5' fill='#f8e030'/><rect x='1.6' y='19.6' width='13.8' height='5' fill='#50d060'/><rect x='1.6' y='24.6' width='13.8' height='2.8' fill='#30b0f0'/><rect x='1.6' y='27.4' width='13.8' height='2' fill='#2050d0'/></svg><div class='t' style='left:255.14px;top:984.58px;font-size:24.71px;line-height:24.71px;color:#333;font-weight:400;z-index:5;transform:scaleX(0.9323);transform-origin:0 0;-webkit-text-stroke:0.3px #333;'>Results</div><svg class='i' style='left:1250px;top:460px;z-index:6;will-change:transform;' width='1050' height='1200' viewBox='0 0 1050 1200'>
<defs>
 <linearGradient id='hrod' x1='0' y1='0' x2='0' y2='1'>
  <stop offset='0' stop-color='#6e6b63'/><stop offset='0.08' stop-color='#8a877e'/><stop offset='0.2' stop-color='#9d9a91'/>
  <stop offset='0.38' stop-color='#878479'/><stop offset='0.52' stop-color='#7a776e'/><stop offset='0.6' stop-color='#8e8c86'/>
  <stop offset='0.68' stop-color='#6d6a62'/><stop offset='0.85' stop-color='#5a5750'/><stop offset='1' stop-color='#5c5952'/>
 </linearGradient>
 <linearGradient id='vrod' x1='1569' y1='0' x2='1630' y2='0' gradientUnits='userSpaceOnUse'>
  <stop offset='0' stop-color='#6a6963'/><stop offset='0.15' stop-color='#8b8a84'/><stop offset='0.3' stop-color='#8e8d86'/>
  <stop offset='0.55' stop-color='#807f77'/><stop offset='0.8' stop-color='#727169'/><stop offset='1' stop-color='#66645e'/>
 </linearGradient>
 <linearGradient id='slotg' x1='1446' y1='0' x2='1540' y2='0' gradientUnits='userSpaceOnUse'>
  <stop offset='0' stop-color='#c9c5b8'/><stop offset='0.5' stop-color='#d3d0c4'/><stop offset='1' stop-color='#d6d3c7'/>
 </linearGradient>
 <linearGradient id='leftedge' x1='1352' y1='0' x2='1370' y2='0' gradientUnits='userSpaceOnUse'>
  <stop offset='0' stop-color='#bdb9ac'/><stop offset='1' stop-color='#cdc9bc'/>
 </linearGradient>
 <linearGradient id='shead' x1='0' y1='0' x2='0' y2='1'>
  <stop offset='0' stop-color='#6a675f'/><stop offset='0.25' stop-color='#a09d94'/><stop offset='0.45' stop-color='#8e8b83'/><stop offset='0.55' stop-color='#9e9b93'/><stop offset='0.8' stop-color='#6a675f'/><stop offset='1' stop-color='#4e4b45'/>
 </linearGradient>
 <linearGradient id='blueg' x1='0' y1='0' x2='1' y2='1'>
  <stop offset='0' stop-color='#1a6cff'/><stop offset='0.6' stop-color='#0048d8'/><stop offset='1' stop-color='#001c80'/>
 </linearGradient>
</defs>
<g transform='translate(-1250,-460)'>
 <!-- horizontal rod -->
 <linearGradient id='hrod2' x1='2000' y1='971' x2='2024' y2='1062' gradientUnits='userSpaceOnUse'>
  <stop offset='0' stop-color='#6e6b63'/><stop offset='0.08' stop-color='#8a877e'/><stop offset='0.2' stop-color='#9d9a91'/>
  <stop offset='0.38' stop-color='#878479'/><stop offset='0.52' stop-color='#7a776e'/><stop offset='0.6' stop-color='#8e8c86'/>
  <stop offset='0.68' stop-color='#6d6a62'/><stop offset='0.85' stop-color='#5a5750'/><stop offset='1' stop-color='#5c5952'/>
 </linearGradient>
 <path d='M1800,1024 L2215,914 C2232,914 2252,945 2255,975 C2257,995 2248,1005 2240,1007 L1800,1121Z' fill='url(#hrod2)'/>
 <path d='M2215,914 C2232,914 2252,945 2255,975 C2257,995 2248,1005 2240,1007' fill='none' stroke='#262626' stroke-width='1.8'/>
 <ellipse cx='2238' cy='955' rx='9' ry='15' transform='rotate(-20 2238 955)' fill='none' stroke='#b0ada6' stroke-width='3' opacity='0.6'/>
 <path d='M1942,990 L1975,980 L1997,991 L1962,1002Z' fill='#cfcfcb' opacity='0.75'/><path d='M1940,985 Q1935,972 1952,970 Q1968,970 1970,980' fill='none' stroke='#d8d8d4' stroke-width='2.5' opacity='0.6'/>
 <!-- slot interior -->
 <path d='M1538,896 L1470,913 C1440,922 1440,942 1460,950 L1503,977 L1504,1317 L1538,1310Z' fill='url(#slotg)'/>
 <!-- left rounded edge + left face -->
 <path d='M1352,940 C1356,952 1362,956 1368,958 L1370,1370 C1360,1364 1353,1358 1352,1350Z' fill='url(#leftedge)'/>
 <path d='M1368,958 L1428,994 L1430,1408 L1370,1370Z' fill='#cdc9bc'/>
 <path d='M1428,994 L1436,996 L1439,1410 L1430,1408Z' fill='#d2cfc3'/>
 <!-- left front face -->
 <path d='M1436,996 L1503,977 L1504,1392 L1439,1410Z' fill='#d6d3c7'/>
 <!-- outlines left part -->
 <path d='M1352,940 L1352,1350 C1353,1358 1360,1366 1370,1370 L1430,1408 L1439,1410 L1504,1392' fill='none' stroke='#262626' stroke-width='1.7' stroke-linejoin='round'/>
 <path d='M1369,960 V1370 M1429,994 V1408 M1439,997 V1410 M1502,978 V1392' fill='none' stroke='#2a2a2a' stroke-width='1.2'/>
 <path d='M1504,1317 L1538,1310' fill='none' stroke='#262626' stroke-width='1.7' stroke-linejoin='round'/>
 <!-- top face -->
 <path d='M1352,940 C1352,915 1375,905 1394,899 L1538,864 L1629,871 C1635,870 1640,869 1643,869 L1750,845 L1761,845 L1823,885 L1716,917 L1620,945 L1538,896 L1470,913 C1440,922 1440,942 1460,950 L1503,977 L1436,996 L1428,994 L1368,958 C1358,952 1352,946 1352,940Z' fill='#dfd9cb' stroke='#262626' stroke-width='1.7' stroke-linejoin='round'/>
 <!-- vertical rod -->
 <path d='M1539,497 L1569,515 L1569,1638 L1539,1620Z' fill='#5c5b55'/>
 <path d='M1569,515 C1585,518 1610,514 1628.5,498 L1628.5,1623 C1620,1634 1600,1640 1583,1641 L1569,1638Z' fill='url(#vrod)'/>
 <path d='M1539,497 C1548,487 1560,481 1575,480.5 L1598,480.5 C1612,482 1624,490 1628.5,498 C1622,508 1600,516 1582,517 L1569,515Z' fill='#a3a39c' stroke='#262626' stroke-width='1.7' stroke-linejoin='round'/>
 <path d='M1560,490 L1590,483 L1622,495 L1600,506 L1585,510Z' fill='#c9cac4' opacity='0.8'/>
 <path d='M1539,497 V1620 L1569,1638 C1580,1641 1605,1640 1620,1633 C1626,1629 1629,1625 1630,1621' fill='none' stroke='#262626' stroke-width='1.7' stroke-linejoin='round'/>
 <path d='M1569,515 V1638' stroke='#1e1e1e' stroke-width='2'/>
 <ellipse cx='1590' cy='1625' rx='24' ry='10' fill='#a09f98' opacity='0.45'/>
 <!-- threads in slot -->
 <g>
  <path d='M1504.5,1024 Q1510,1012 1523,1011 Q1538,1010 1543,1030 Q1545,1044 1540,1051 Q1525,1058 1504.5,1058Z' fill='#85827a'/>
  <path d='M1506,1022 Q1514,1040 1507,1058 M1513,1016 Q1523,1036 1516,1057 M1521,1013 Q1531,1033 1525,1056 M1529,1011 Q1539,1031 1533,1054 M1536,1012 Q1544,1030 1540,1051' stroke='#111' stroke-width='2.2' fill='none'/>
  <path d='M1504.5,1024 Q1510,1012 1523,1011 Q1538,1010 1543,1030 Q1545,1044 1540,1051' stroke='#111' stroke-width='1.6' fill='none'/>
  <path d='M1504.5,1231 L1544,1252 L1543,1262 Q1538,1272 1528,1275 Q1515,1277 1504.5,1278Z' fill='#85827a'/>
  <path d='M1507,1240 Q1514,1258 1506,1277 M1514,1244 Q1522,1260 1515,1276 M1522,1248 Q1530,1262 1524,1275 M1530,1252 Q1538,1264 1533,1273 M1537,1256 Q1543,1264 1540,1268' stroke='#111' stroke-width='2.2' fill='none'/>
 </g>
 <!-- right part front face (in front of rod) -->
 <path d='M1620,945 L1716,917 L1823,885 L1823,1299 L1717,1328 L1714,1335 L1619,1358Z' fill='#d6d3c7' stroke='#262626' stroke-width='1.7' stroke-linejoin='round'/>
 <path d='M1620,945 L1639,902 L1632,899' fill='none' stroke='#262626' stroke-width='1.7' stroke-linejoin='round'/>
 <path d='M1713,921 V1335 M1716,917 V1328' stroke='#2a2a2a' stroke-width='1.2'/>
 <!-- engraved text -->
 <g font-family='Liberation Sans' font-weight='700' font-size='50' fill='none' stroke='#121212' stroke-linejoin='round'>
  <text transform='matrix(0,-1,1,-0.3,1808,1257)' stroke-width='1.9' textLength='316' lengthAdjust='spacingAndGlyphs'>Milan Gandhi</text>
  <text transform='matrix(0,-1,1,-0.3,1810.3,1256.4)' stroke-width='1.5' textLength='316' lengthAdjust='spacingAndGlyphs'>Milan Gandhi</text>
 </g>
 <g font-family='Liberation Sans' font-weight='700' font-size='50' fill='none' stroke='#121212' stroke-linejoin='round'>
  <text transform='matrix(0,-1,1,-0.3,1761,1194)' stroke-width='1.9' textLength='171' lengthAdjust='spacingAndGlyphs'>© 2019</text>
  <text transform='matrix(0,-1,1,-0.3,1763.3,1193.4)' stroke-width='1.5' textLength='171' lengthAdjust='spacingAndGlyphs'>© 2019</text>
 </g>
 <path d='M1676,1092 Q1680,1070 1698,1076 Q1714,1086 1712,1112 Q1706,1136 1690,1126 Q1674,1114 1676,1092Z' fill='#e6e4de' opacity='0.35'/>

 <g transform='translate(0,0)'>
  <ellipse cx='1383' cy='1069' rx='19.5' ry='34' fill='#c9a466' stroke='#2a2218' stroke-width='1.6'/>
  <ellipse cx='1382' cy='1070' rx='14.5' ry='28.5' fill='#d0ccbf' stroke='#3a3020' stroke-width='1'/>
  <defs><linearGradient id='thr' x1='0' y1='0' x2='0' y2='1'><stop offset='0' stop-color='#6a675f'/><stop offset='0.4' stop-color='#8c8981'/><stop offset='1' stop-color='#55524b'/></linearGradient></defs>
  <path d='M1347,1058 Q1368,1052 1388,1050 Q1396,1070 1390,1096 Q1372,1098 1356,1102 Z' fill='url(#thr)' stroke='#111' stroke-width='1.2'/>
  <path d='M1352,1057 Q1363,1079 1357,1101 M1359,1055.5 Q1370,1077 1364,1100 M1366,1054 Q1377,1076 1371,1099 M1373,1052.5 Q1384,1075 1378,1098 M1380,1051 Q1391,1073 1385,1097' stroke='#141414' stroke-width='2.3' fill='none'/>
  <path d='M1309,1053 L1327,1046.5 Q1340,1047 1350,1057 L1356,1107 L1350,1118 Q1330,1125 1309,1125Z' fill='url(#shead)' stroke='#222' stroke-width='1.3'/>
  <ellipse cx='1309' cy='1089' rx='21' ry='36' fill='#6a675f' stroke='#1e1e1e' stroke-width='1.6'/>
  <ellipse cx='1311' cy='1089' rx='16' ry='30' fill='none' stroke='#333' stroke-width='1.2'/>
  <ellipse cx='1312' cy='1090' rx='10' ry='19' fill='#8f8b82' stroke='#222' stroke-width='1.4'/>
  <path d='M1304,1078 L1314,1074 L1320,1086 L1318,1102 L1308,1106 L1302,1094Z' fill='#a29e94' stroke='#333' stroke-width='1'/>
 </g>
 <g transform='translate(0,215)'>
  <ellipse cx='1383' cy='1069' rx='19.5' ry='34' fill='#c9a466' stroke='#2a2218' stroke-width='1.6'/>
  <ellipse cx='1382' cy='1070' rx='14.5' ry='28.5' fill='#d0ccbf' stroke='#3a3020' stroke-width='1'/>
  <defs><linearGradient id='thr' x1='0' y1='0' x2='0' y2='1'><stop offset='0' stop-color='#6a675f'/><stop offset='0.4' stop-color='#8c8981'/><stop offset='1' stop-color='#55524b'/></linearGradient></defs>
  <path d='M1347,1058 Q1368,1052 1388,1050 Q1396,1070 1390,1096 Q1372,1098 1356,1102 Z' fill='url(#thr)' stroke='#111' stroke-width='1.2'/>
  <path d='M1352,1057 Q1363,1079 1357,1101 M1359,1055.5 Q1370,1077 1364,1100 M1366,1054 Q1377,1076 1371,1099 M1373,1052.5 Q1384,1075 1378,1098 M1380,1051 Q1391,1073 1385,1097' stroke='#141414' stroke-width='2.3' fill='none'/>
  <path d='M1309,1053 L1327,1046.5 Q1340,1047 1350,1057 L1356,1107 L1350,1118 Q1330,1125 1309,1125Z' fill='url(#shead)' stroke='#222' stroke-width='1.3'/>
  <ellipse cx='1309' cy='1089' rx='21' ry='36' fill='#6a675f' stroke='#1e1e1e' stroke-width='1.6'/>
  <ellipse cx='1311' cy='1089' rx='16' ry='30' fill='none' stroke='#333' stroke-width='1.2'/>
  <ellipse cx='1312' cy='1090' rx='10' ry='19' fill='#8f8b82' stroke='#222' stroke-width='1.4'/>
  <path d='M1304,1078 L1314,1074 L1320,1086 L1318,1102 L1308,1106 L1302,1094Z' fill='#a29e94' stroke='#333' stroke-width='1'/>
 </g>
 <defs><linearGradient id='bl1' x1='0' y1='0' x2='0.3' y2='1'><stop offset='0' stop-color='#0050e6'/><stop offset='0.4' stop-color='#0a5af0'/><stop offset='0.75' stop-color='#0030b0'/><stop offset='1' stop-color='#001a80'/></linearGradient>
 <linearGradient id='bl2' x1='0' y1='0' x2='0' y2='1'><stop offset='0' stop-color='#0040d0'/><stop offset='0.35' stop-color='#005af5'/><stop offset='0.8' stop-color='#0046d8'/><stop offset='1' stop-color='#002aa0'/></linearGradient></defs>
 <path d='M1504.5,1060.8 L1518,1057.8 L1553.8,1069 L1520.4,1100.8 L1513.7,1101.6 L1504.5,1091.2Z' fill='url(#bl1)'/>
 <path d='M1506,1093 Q1512,1088 1518,1092 L1520,1100 Q1514,1103 1508,1096Z' fill='#0a5cf5'/>
 <path d='M1470,1195 L1502,1188 Q1510,1189 1512,1194 L1516,1209 L1557,1236 Q1564,1245 1557,1253 Q1550,1257 1544,1253 L1502,1230 Q1496,1233 1487,1233 Q1478,1231 1476,1222Z' fill='url(#bl2)'/>
 <path d='M1477,1224 Q1486,1216 1498,1226 L1500,1231 Q1488,1235 1479,1229Z' fill='#0036b8'/>
 <path d='M1504,1190 Q1514,1196 1513,1208 L1506,1200Z' fill='#0030a8'/>
</g></svg><svg class='i' style='left:3120px;top:280px;z-index:6;will-change:transform;' width='220' height='200' viewBox='0 0 220 200'>
<defs><radialGradient id='vcsh' cx='0.5' cy='0.5' r='0.5'><stop offset='0' stop-color='#000' stop-opacity='0.2'/><stop offset='0.6' stop-color='#000' stop-opacity='0.08'/><stop offset='1' stop-color='#000' stop-opacity='0'/></radialGradient>
<linearGradient id='vcf' x1='0' y1='0' x2='0' y2='1'><stop offset='0' stop-color='#f0f0f0'/><stop offset='1' stop-color='#d8d8d8'/></linearGradient>
<filter id='vblur' x='-10%' y='-10%' width='120%' height='120%'><feGaussianBlur stdDeviation='0.5'/></filter></defs>
<g transform='translate(-3120,-280)'>
 <ellipse cx='3232' cy='436' rx='82' ry='26' fill='url(#vcsh)'/>
 <g filter='url(#vblur)'>
 <path d='M3164.6,315.8 L3238.5,300.9 L3300.4,323.2 L3214.5,339.8Z' fill='#efefef' stroke='#9a9a9a' stroke-width='1.2' stroke-dasharray='4 4'/>
 <path d='M3164.6,315.8 L3214.5,339.8 L3214.5,439 L3170,394Z' fill='url(#vcf)' stroke='#a8a8a8' stroke-width='1.1' stroke-dasharray='4 4'/>
 <path d='M3214.5,339.8 L3300.4,323.2 L3298,409 L3214.5,440Z' fill='url(#vcf)' stroke='#a8a8a8' stroke-width='1.1' stroke-dasharray='4 4'/>
 <rect x='3205' y='333.5' width='26' height='25' fill='#e4e8f0' opacity='0.6'/>
 <g transform='matrix(1,-0.285,0,1,3230.5,397)'><text x='0' y='0' font-family='Liberation Sans' font-weight='700' font-size='27' fill='#8a8e96' textLength='57' lengthAdjust='spacingAndGlyphs'>FRONT</text></g>
 <g transform='matrix(0.55,0.5,0,1,3179,370)'><text x='0' y='0' font-family='Liberation Sans' font-weight='700' font-size='18' fill='#8a8e96' textLength='38' lengthAdjust='spacingAndGlyphs'>LEFT</text></g>
 <path d='M3225,312 L3242,306 M3228,318 L3246,311' stroke='#aaa' stroke-width='1.2' stroke-dasharray='2 2'/>
 </g>
 <path d='M3214.5,326.7 V440' stroke='#6060f0' stroke-width='2.8'/>
 <path d='M3214.5,439 L3165.2,394.2' stroke='#78dc78' stroke-width='2.8'/>
 <path d='M3214.5,441.2 L3307.2,409.1' stroke='#e86a6a' stroke-width='2.8'/>
 <text x='3203.5' y='319.2' font-family='Liberation Sans' font-size='31' font-weight='700' fill='#7272f2' textLength='18' lengthAdjust='spacingAndGlyphs'>Z</text>
 <text x='3150.5' y='399.4' font-family='Liberation Sans' font-size='29' fill='#84ea84' textLength='15' lengthAdjust='spacingAndGlyphs'>Y</text>
 <text x='3308.5' y='415.4' font-family='Liberation Sans' font-size='30' fill='#ff8686' textLength='16.5' lengthAdjust='spacingAndGlyphs'>X</text>
</g></svg><svg class='i' style='left:1472px;top:1960px;z-index:6;' width='412' height='48' viewBox='0 0 412 48'><defs>
 <linearGradient id='lkg' x1='0' y1='0' x2='0' y2='1'><stop offset='0' stop-color='#7c8494'/><stop offset='1' stop-color='#c8ccd6'/></linearGradient>
 <linearGradient id='lkf' x1='0' y1='0' x2='0' y2='1'><stop offset='0' stop-color='#d8dce2'/><stop offset='1' stop-color='#8a92a0'/></linearGradient>
 <linearGradient id='mag' x1='0' y1='0' x2='0' y2='1'><stop offset='0' stop-color='#d4e6ea'/><stop offset='1' stop-color='#f8fcfc'/></linearGradient>
 <linearGradient id='scr' x1='0' y1='0' x2='0' y2='1'><stop offset='0' stop-color='#a8c4e4'/><stop offset='1' stop-color='#8aaedc'/></linearGradient>
 <linearGradient id='gbg' x1='0' y1='0' x2='0' y2='1'><stop offset='0' stop-color='#5a5e66'/><stop offset='1' stop-color='#3a3e48'/></linearGradient>
 <linearGradient id='gcell' x1='0' y1='1971' x2='0' y2='1997' gradientUnits='userSpaceOnUse'><stop offset='0' stop-color='#ffffff'/><stop offset='0.5' stop-color='#e4e8f0'/><stop offset='1' stop-color='#b8c0d4'/></linearGradient>
</defs>
<g transform='translate(-1472,-1960)'>
 <rect x='1472' y='1960' width='412' height='48' fill='#f0f0f0'/>
 <path d='M1499.6,1991.2 C1497,1997 1491,1999 1488.5,1992 C1486,1985 1486.5,1975 1489.5,1970.5 C1492,1966.5 1496.5,1967.5 1498.7,1973.5' fill='none' stroke='#2a2e36' stroke-width='1.3'/>
 <path d='M1485.4,1977.1 C1479,1979 1478,1985.5 1485.4,1988.7' fill='none' stroke='#2a2e36' stroke-width='1.3'/>
 <path d='M1490.3,1989.4 H1495 C1503,1989 1510,1986 1509,1982 C1508.5,1980 1506,1978.5 1503.2,1977.8' fill='none' stroke='#2a2e36' stroke-width='1.3'/>
 <path d='M1496,1973 L1501,1973.5 L1498.6,1976.5Z M1502.5,1976.5 L1503.5,1980.5 L1501,1978.2Z' fill='#2a2e36' stroke='#2a2e36' stroke-width='0.8'/>
 <path d='M1492,1982.5 H1497 M1494.5,1980 V1985' stroke='#1e7fe0' stroke-width='1.2'/>
 <path d='M1520.5,1980 H1532 L1526.2,1987.3Z M1742,1980 H1754 L1748,1987.3Z M1802,1980 H1813.8 L1807.9,1987.3Z M1864.2,1980 H1876 L1870.1,1987.3Z' fill='#333'/>
 <path d='M1546.6,1978 L1554.4,1970.4 L1554.4,1975.1 L1566.4,1972.2 V1977.5' fill='url(#lkf)' stroke='#3a3e46' stroke-width='0.8'/>
 <rect x='1546.9' y='1978.5' width='26.6' height='18.3' rx='1' fill='#f2f4f6' stroke='#2e3238' stroke-width='1.4'/>
 <rect x='1550.6' y='1982.4' width='19' height='10.2' rx='0.8' fill='url(#lkg)' stroke='#2e3238' stroke-width='1.1'/>
 <path d='M1598,1983 Q1596,1981 1599,1980.5 L1606,1985 L1604.5,1972 Q1605.5,1969.5 1607.5,1971.5 L1610,1981 L1612,1969.5 Q1613,1967.5 1615,1969.5 L1615,1981 L1618,1971.5 Q1619.5,1969.5 1621,1972 L1619.5,1983 L1624.5,1975.5 Q1626.5,1974.5 1626.5,1977 L1622,1990 Q1621,1996 1618,1997.5 H1608.5 Q1605,1996 1603.5,1991Z' fill='#f4f5f8' stroke='#2a2e36' stroke-width='1.1' stroke-linejoin='round'/>
 <circle cx='1659.8' cy='1978.8' r='10.6' fill='url(#mag)' stroke='#2a2e36' stroke-width='1.3'/>
 <path d='M1668.5,1987 L1676.8,1995.3' stroke='#2a2e36' stroke-width='3.6' stroke-linecap='round'/>
 <path d='M1672.3,1971.4 H1679 M1675.6,1968.2 V1974.6 M1672.3,1977.6 H1679' stroke='#2a2e36' stroke-width='1'/>
 <rect x='1701.3' y='1969.4' width='29.3' height='28.9' fill='none' stroke='#555' stroke-width='1' stroke-dasharray='3 2.4'/>
 <circle cx='1711.7' cy='1979.7' r='10.4' fill='url(#mag)' stroke='#2a2e36' stroke-width='1.3'/>
 <path d='M1720.6,1988 L1729,1995.8' stroke='#2a2e36' stroke-width='3.6' stroke-linecap='round'/>
 <rect x='1767.6' y='1968.5' width='28.9' height='23.1' rx='1.2' fill='#f6f7fa' stroke='#2a2e36' stroke-width='1.3'/>
 <rect x='1770.6' y='1971.4' width='23' height='17' rx='1' fill='url(#scr)' stroke='#1e3a70' stroke-width='1.1'/>
 <path d='M1778.4,1991.6 V1995.2 M1785.2,1991.6 V1995.2' stroke='#2a2e36' stroke-width='0.9'/>
 <rect x='1778.4' y='1991.6' width='6.8' height='3.6' fill='#c4c8d2'/>
 <path d='M1773.6,1997.6 Q1773,1995.6 1778,1995 H1786 Q1791,1995.6 1790.6,1997.6Z' fill='#e8eaee' stroke='#2a2e36' stroke-width='1'/>
 <rect x='1829.6' y='1969.4' width='28' height='28.4' rx='1.5' fill='url(#gbg)' stroke='#2a2a2a' stroke-width='1.2'/>
 <rect x='1831.20' y='1971.00' width='3.1' height='3.1' fill='url(#gcell)'/><rect x='1831.20' y='1974.85' width='3.1' height='3.1' fill='url(#gcell)'/><rect x='1831.20' y='1978.70' width='3.1' height='3.1' fill='url(#gcell)'/><rect x='1831.20' y='1982.55' width='3.1' height='3.1' fill='url(#gcell)'/><rect x='1831.20' y='1986.40' width='3.1' height='3.1' fill='url(#gcell)'/><rect x='1831.20' y='1990.25' width='3.1' height='3.1' fill='url(#gcell)'/><rect x='1831.20' y='1994.10' width='3.1' height='3.1' fill='url(#gcell)'/><rect x='1835.05' y='1971.00' width='3.1' height='3.1' fill='url(#gcell)'/><rect x='1835.05' y='1974.85' width='3.1' height='3.1' fill='url(#gcell)'/><rect x='1835.05' y='1978.70' width='3.1' height='3.1' fill='url(#gcell)'/><rect x='1835.05' y='1982.55' width='3.1' height='3.1' fill='url(#gcell)'/><rect x='1835.05' y='1986.40' width='3.1' height='3.1' fill='url(#gcell)'/><rect x='1835.05' y='1990.25' width='3.1' height='3.1' fill='url(#gcell)'/><rect x='1835.05' y='1994.10' width='3.1' height='3.1' fill='url(#gcell)'/><rect x='1838.90' y='1971.00' width='3.1' height='3.1' fill='url(#gcell)'/><rect x='1838.90' y='1974.85' width='3.1' height='3.1' fill='url(#gcell)'/><rect x='1838.90' y='1978.70' width='3.1' height='3.1' fill='url(#gcell)'/><rect x='1838.90' y='1982.55' width='3.1' height='3.1' fill='url(#gcell)'/><rect x='1838.90' y='1986.40' width='3.1' height='3.1' fill='url(#gcell)'/><rect x='1838.90' y='1990.25' width='3.1' height='3.1' fill='url(#gcell)'/><rect x='1838.90' y='1994.10' width='3.1' height='3.1' fill='url(#gcell)'/><rect x='1842.75' y='1971.00' width='3.1' height='3.1' fill='url(#gcell)'/><rect x='1842.75' y='1974.85' width='3.1' height='3.1' fill='url(#gcell)'/><rect x='1842.75' y='1978.70' width='3.1' height='3.1' fill='url(#gcell)'/><rect x='1842.75' y='1982.55' width='3.1' height='3.1' fill='url(#gcell)'/><rect x='1842.75' y='1986.40' width='3.1' height='3.1' fill='url(#gcell)'/><rect x='1842.75' y='1990.25' width='3.1' height='3.1' fill='url(#gcell)'/><rect x='1842.75' y='1994.10' width='3.1' height='3.1' fill='url(#gcell)'/><rect x='1846.60' y='1971.00' width='3.1' height='3.1' fill='url(#gcell)'/><rect x='1846.60' y='1974.85' width='3.1' height='3.1' fill='url(#gcell)'/><rect x='1846.60' y='1978.70' width='3.1' height='3.1' fill='url(#gcell)'/><rect x='1846.60' y='1982.55' width='3.1' height='3.1' fill='url(#gcell)'/><rect x='1846.60' y='1986.40' width='3.1' height='3.1' fill='url(#gcell)'/><rect x='1846.60' y='1990.25' width='3.1' height='3.1' fill='url(#gcell)'/><rect x='1846.60' y='1994.10' width='3.1' height='3.1' fill='url(#gcell)'/><rect x='1850.45' y='1971.00' width='3.1' height='3.1' fill='url(#gcell)'/><rect x='1850.45' y='1974.85' width='3.1' height='3.1' fill='url(#gcell)'/><rect x='1850.45' y='1978.70' width='3.1' height='3.1' fill='url(#gcell)'/><rect x='1850.45' y='1982.55' width='3.1' height='3.1' fill='url(#gcell)'/><rect x='1850.45' y='1986.40' width='3.1' height='3.1' fill='url(#gcell)'/><rect x='1850.45' y='1990.25' width='3.1' height='3.1' fill='url(#gcell)'/><rect x='1850.45' y='1994.10' width='3.1' height='3.1' fill='url(#gcell)'/><rect x='1854.30' y='1971.00' width='3.1' height='3.1' fill='url(#gcell)'/><rect x='1854.30' y='1974.85' width='3.1' height='3.1' fill='url(#gcell)'/><rect x='1854.30' y='1978.70' width='3.1' height='3.1' fill='url(#gcell)'/><rect x='1854.30' y='1982.55' width='3.1' height='3.1' fill='url(#gcell)'/><rect x='1854.30' y='1986.40' width='3.1' height='3.1' fill='url(#gcell)'/><rect x='1854.30' y='1990.25' width='3.1' height='3.1' fill='url(#gcell)'/><rect x='1854.30' y='1994.10' width='3.1' height='3.1' fill='url(#gcell)'/>
</g></svg>
</body></html>
